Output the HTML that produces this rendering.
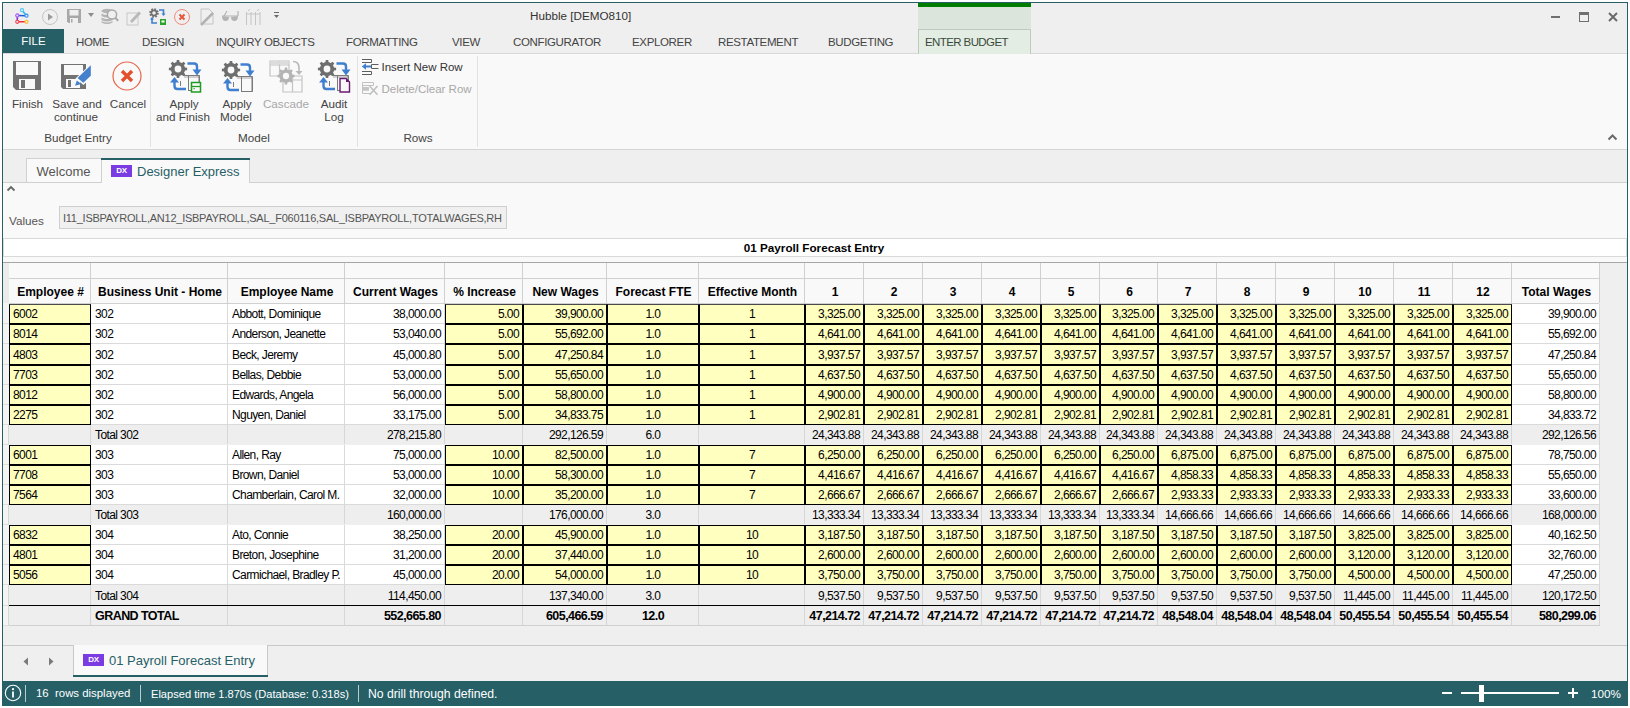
<!DOCTYPE html>
<html><head><meta charset="utf-8"><title>Hubble</title>
<style>
html,body{margin:0;padding:0;}
body{width:1630px;height:708px;position:relative;overflow:hidden;background:#fff;font-family:"Liberation Sans",sans-serif;}
body>div{position:absolute;}
.t{white-space:pre;}
</style></head><body>
<div style="left:0px;top:0px;width:1630px;height:708px;background:#ffffff;"></div>
<div style="left:2px;top:2px;width:1626px;height:704px;background:#efefef;border:1px solid #275f67;box-sizing:border-box;"></div>
<div style="left:3px;top:53px;width:1624px;height:1px;background:#d9d9d9;"></div>
<div style="left:3px;top:54px;width:1624px;height:95px;background:#f9f9f9;"></div>
<div style="left:3px;top:149px;width:1624px;height:1px;background:#d6d6d6;"></div>
<div style="left:3px;top:182px;width:1624px;height:1px;background:#d0d0d0;"></div>
<div style="left:3px;top:183px;width:1624px;height:55px;background:#f9f9f9;"></div>
<div style="left:3px;top:238px;width:1624px;height:1px;background:#d9d9d9;"></div>
<div style="left:3px;top:239px;width:1624px;height:17px;background:#ffffff;border-left:1px solid #d9d9d9;border-right:1px solid #d9d9d9;box-sizing:border-box;"></div>
<div style="left:3px;top:256px;width:1624px;height:1px;background:#d9d9d9;"></div>
<div style="left:3px;top:257px;width:1624px;height:5px;background:#f9f9f9;"></div>
<div style="left:3px;top:262px;width:1624px;height:1px;background:#a6a6a6;"></div>
<svg style="position:absolute;left:15px;top:7px" width="15" height="19" viewBox="0 0 15 19"><g stroke-width="1.6" stroke-linecap="round" fill="none"><line x1="7" y1="3.2" x2="11.5" y2="8.7" stroke="#2ab4f0"/><line x1="2.3" y1="8.5" x2="11.5" y2="8.7" stroke="#1d5ad8"/><line x1="2.3" y1="8.5" x2="2.3" y2="14.8" stroke="#8d2ad0"/><line x1="2.3" y1="14.8" x2="11.5" y2="14.8" stroke="#f2303c"/></g><g stroke-width="1.1"><circle cx="7" cy="3.2" r="1.6" fill="#d8f4ff" stroke="#52c8f8"/><circle cx="11.5" cy="8.7" r="1.6" fill="#d8ecff" stroke="#3a8ef0"/><circle cx="2.3" cy="8.5" r="1.6" fill="#ecdcff" stroke="#a35cf0"/><circle cx="2.3" cy="14.8" r="1.6" fill="#ffdde0" stroke="#f2404c"/><circle cx="11.5" cy="14.8" r="1.6" fill="#fff2cc" stroke="#f8b830"/></g></svg>
<svg style="position:absolute;left:41px;top:8px" width="18" height="18" viewBox="0 0 18 18"><circle cx="9" cy="9" r="7.5" fill="none" stroke="#c4c4c4" stroke-width="1"/><path d="M7 5.5 L12 9 L7 12.5Z" fill="#9c9c9c"/></svg>
<svg style="position:absolute;left:66px;top:8px" width="16" height="16" viewBox="0 0 16 16"><path d="M1 1H15V15H2.5L1 13.5Z" fill="#a8a8a8"/><rect x="3.5" y="2" width="9" height="5.5" fill="#efefef"/><rect x="4" y="10" width="8" height="5" fill="#efefef"/><rect x="5" y="11" width="1.5" height="3.5" fill="#a8a8a8"/></svg>
<svg style="position:absolute;left:88px;top:13px" width="7" height="5" viewBox="0 0 7 5"><path d="M0 0H6L3 4Z" fill="#8c8c8c"/></svg>
<svg style="position:absolute;left:101px;top:8px" width="18" height="17" viewBox="0 0 18 17"><g fill="#b4b4b4"><ellipse cx="6" cy="3" rx="5.5" ry="2.2"/><path d="M0.5 5.5Q6 8.5 11.5 5.5V8Q6 11 0.5 8Z"/><path d="M0.5 9.5Q6 12.5 11.5 9.5V12Q6 15 0.5 12Z"/><path d="M0.5 13Q6 16 11.5 13V14.5Q6 17.5 0.5 14.5Z"/></g><circle cx="11" cy="6.5" r="4.6" fill="#efefef" stroke="#a8a8a8" stroke-width="1.5"/><line x1="14.2" y1="9.8" x2="17.2" y2="12.8" stroke="#a8a8a8" stroke-width="2"/></svg>
<svg style="position:absolute;left:126px;top:9px" width="16" height="17" viewBox="0 0 16 17"><rect x="1" y="4" width="11" height="12" fill="none" stroke="#c8c8c8" stroke-width="1"/><path d="M4 12 L13 2.5 L15 4.5 L6 14Z" fill="#b8b8b8"/></svg>
<svg style="position:absolute;left:149px;top:8px" width="18" height="18" viewBox="0 0 18 18"><circle cx="5" cy="5" r="3.6" fill="none" stroke="#6f6f6f" stroke-width="2.4" stroke-dasharray="1.6 1.2"/><circle cx="5" cy="5" r="2.6" fill="none" stroke="#6f6f6f" stroke-width="1.6"/><path d="M10 2H14.5V6" fill="none" stroke="#3b7fd0" stroke-width="1.6"/><path d="M12.5 5.5H16.5L14.5 8Z" fill="#3b7fd0"/><path d="M8 15H3V11" fill="none" stroke="#3b7fd0" stroke-width="1.6"/><path d="M1 11.5H5L3 9Z" fill="#3b7fd0"/><rect x="11" y="11" width="6" height="6" fill="#2aa52a"/><rect x="12.5" y="12.5" width="3" height="2" fill="#fff"/></svg>
<svg style="position:absolute;left:173px;top:8px" width="18" height="18" viewBox="0 0 18 18"><circle cx="9" cy="9" r="7.5" fill="none" stroke="#f08a78" stroke-width="1"/><path d="M6.5 6.5L11.5 11.5M11.5 6.5L6.5 11.5" stroke="#e8553a" stroke-width="2"/></svg>
<svg style="position:absolute;left:199px;top:8px" width="17" height="18" viewBox="0 0 17 18"><path d="M2 1H10L14 5V16H2Z" fill="none" stroke="#c4c4c4" stroke-width="1"/><path d="M2 17 L14 5" stroke="#b2b2b2" stroke-width="2.5"/></svg>
<svg style="position:absolute;left:221px;top:10px" width="18" height="12" viewBox="0 0 18 12"><path d="M1 6 Q1 11 4.5 11 Q8 11 8 7Z M10 7 Q10 11 13.5 11 Q17 11 17 6Z" fill="#b4b4b4"/><path d="M1 6H17 M3 6L6 1 M17 6V1" stroke="#b4b4b4" stroke-width="1.2" fill="none"/></svg>
<svg style="position:absolute;left:245px;top:8px" width="18" height="18" viewBox="0 0 18 18"><path d="M1.5 4V17 M6 4V17 M10.5 4V17 M15 4V17 M1.5 6H15" stroke="#c4c4c4" stroke-width="1" fill="none"/><path d="M3 3L5 1 M12 3L14 1" stroke="#c4c4c4" stroke-width="1"/></svg>
<svg style="position:absolute;left:274px;top:12px" width="6" height="8" viewBox="0 0 6 8"><rect x="0" y="0" width="5" height="1" fill="#6a6a6a"/><path d="M0 3H5L2.5 6Z" fill="#6a6a6a"/></svg>
<div class="t" style="left:530px;top:10.10px;font-size:11.7px;line-height:11.7px;color:#333;">Hubble [DEMO810]</div>
<div style="left:1551px;top:16px;width:9px;height:2px;background:#707070;"></div>
<div style="left:1579px;top:12px;width:10px;height:10px;border:1px solid #707070;border-top-width:3px;box-sizing:border-box;"></div>
<svg style="position:absolute;left:1608px;top:12px" width="10" height="10" viewBox="0 0 10 10"><path d="M1 1L9 9M9 1L1 9" stroke="#6a6a6a" stroke-width="2"/></svg>
<div style="left:3px;top:29px;width:61px;height:24px;background:#275f67;"></div>
<div class="t" style="left:3.50px;top:35.77px;width:60px;text-align:center;font-size:11.5px;line-height:11.5px;color:#fff;">FILE</div>
<div class="t" style="left:76px;top:37.27px;font-size:11.5px;line-height:11.5px;color:#444;letter-spacing:-0.35px;">HOME</div>
<div class="t" style="left:142px;top:37.27px;font-size:11.5px;line-height:11.5px;color:#444;letter-spacing:-0.35px;">DESIGN</div>
<div class="t" style="left:216px;top:37.27px;font-size:11.5px;line-height:11.5px;color:#444;letter-spacing:-0.35px;">INQUIRY OBJECTS</div>
<div class="t" style="left:346px;top:37.27px;font-size:11.5px;line-height:11.5px;color:#444;letter-spacing:-0.35px;">FORMATTING</div>
<div class="t" style="left:452px;top:37.27px;font-size:11.5px;line-height:11.5px;color:#444;letter-spacing:-0.35px;">VIEW</div>
<div class="t" style="left:513px;top:37.27px;font-size:11.5px;line-height:11.5px;color:#444;letter-spacing:-0.35px;">CONFIGURATOR</div>
<div class="t" style="left:632px;top:37.27px;font-size:11.5px;line-height:11.5px;color:#444;letter-spacing:-0.35px;">EXPLORER</div>
<div class="t" style="left:718px;top:37.27px;font-size:11.5px;line-height:11.5px;color:#444;letter-spacing:-0.35px;">RESTATEMENT</div>
<div class="t" style="left:828px;top:37.27px;font-size:11.5px;line-height:11.5px;color:#444;letter-spacing:-0.35px;">BUDGETING</div>
<div style="left:918px;top:3px;width:113px;height:4px;background:#007d00;"></div>
<div style="left:918px;top:7px;width:113px;height:22px;background:#dce5dc;"></div>
<div style="left:918px;top:29px;width:113px;height:25px;background:#e4ede4;border:1px solid #bccbbc;border-bottom:none;box-sizing:border-box;"></div>
<div class="t" style="left:925px;top:37.27px;font-size:11.5px;line-height:11.5px;color:#3a4a3a;letter-spacing:-0.6px;">ENTER BUDGET</div>
<svg style="position:absolute;left:13px;top:61px" width="29" height="30" viewBox="0 0 29 30"><path d="M0 0H28V29H3L0 26Z" fill="#727272"/><rect x="3" y="1" width="22" height="13" fill="#f9f9f9"/><rect x="6" y="18" width="16" height="10" fill="#f9f9f9"/><rect x="8" y="19" width="4" height="8" fill="#727272"/></svg>
<div class="t" style="left:-2.50px;top:98.10px;width:60px;text-align:center;font-size:11.7px;line-height:11.7px;color:#444;">Finish</div>
<svg style="position:absolute;left:61px;top:63px" width="32" height="28" viewBox="0 0 32 28"><path d="M0 1H25V26H2L0 24Z" fill="#727272"/><rect x="3" y="2" width="19" height="10" fill="#f9f9f9"/><rect x="5" y="16" width="14" height="9" fill="#f9f9f9"/><rect x="7" y="17" width="3" height="7" fill="#727272"/><path d="M14.5 15.5 L30.8 0 L31.5 0 V13.5 L22.5 22 Z" fill="#f9f9f9"/><path d="M16.5 15 L29.8 2.25 V12.7 L22.3 19.75 Z" fill="#4480cc"/><path d="M14 22.7 L15.8 17.5 L20.5 21 Z" fill="#4480cc"/></svg>
<div class="t" style="left:37.00px;top:98.10px;width:80px;text-align:center;font-size:11.7px;line-height:11.7px;color:#444;">Save and</div>
<div class="t" style="left:36.00px;top:111.10px;width:80px;text-align:center;font-size:11.7px;line-height:11.7px;color:#444;">continue</div>
<svg style="position:absolute;left:112px;top:61px" width="30" height="30" viewBox="0 0 30 30"><circle cx="15" cy="15" r="14" fill="none" stroke="#e8664a" stroke-width="1.2"/><path d="M10 10L20 20M20 10L10 20" stroke="#e2502e" stroke-width="3.4"/></svg>
<div class="t" style="left:98.00px;top:98.10px;width:60px;text-align:center;font-size:11.7px;line-height:11.7px;color:#444;">Cancel</div>
<div class="t" style="left:28.00px;top:132.10px;width:100px;text-align:center;font-size:11.7px;line-height:11.7px;color:#444;">Budget Entry</div>
<div style="left:150px;top:56px;width:1px;height:91px;background:#e2e2e2;"></div>
<svg style="position:absolute;left:168px;top:59px" width="35" height="35" viewBox="0 0 35 35"><polygon points="8.41,3.38 8.78,0.88 11.22,0.88 11.59,3.38 13.56,4.20 15.58,2.69 17.31,4.42 15.80,6.44 16.62,8.41 19.12,8.78 19.12,11.22 16.62,11.59 15.80,13.56 17.31,15.58 15.58,17.31 13.56,15.80 11.59,16.62 11.22,19.12 8.78,19.12 8.41,16.62 6.44,15.80 4.42,17.31 2.69,15.58 4.20,13.56 3.38,11.59 0.88,11.22 0.88,8.78 3.38,8.41 4.20,6.44 2.69,4.42 4.42,2.69 6.44,4.20" fill="#6e6e6e"/><circle cx="10" cy="10" r="7.11" fill="#6e6e6e"/><circle cx="10" cy="10" r="3.40" fill="#f9f9f9"/><path d="M19.5 4.5H26Q29 4.5 29 7.5V12" fill="none" stroke="#3f7fcf" stroke-width="2.4"/><path d="M24.5 10.5H33.5L29 16.5Z" fill="#3f7fcf"/><path d="M18 30H9.5Q6.5 30 6.5 27V23" fill="none" stroke="#3f7fcf" stroke-width="2.4"/><path d="M2 23.5H11L6.5 18Z" fill="#3f7fcf"/><rect x="16" y="16.5" width="15" height="2.5" fill="#d0d0d0"/><path d="M15 16.5H31.5V31.5H20 M20.5 16.5V31.5 M31 16.5V31.5 M12.5 22V27" fill="none" stroke="#7a7a7a" stroke-width="1"/><rect x="23.5" y="23.5" width="9" height="9.5" fill="#f9f9f9" stroke="#1e9e1e" stroke-width="1.5"/><path d="M23.5 27.5H32.5" stroke="#1e9e1e" stroke-width="1.3"/><rect x="25.5" y="29" width="1.2" height="1.2" fill="#1e9e1e"/></svg>
<div class="t" style="left:144.00px;top:98.10px;width:80px;text-align:center;font-size:11.7px;line-height:11.7px;color:#444;">Apply</div>
<div class="t" style="left:143.00px;top:111.10px;width:80px;text-align:center;font-size:11.7px;line-height:11.7px;color:#444;">and Finish</div>
<svg style="position:absolute;left:221px;top:60px" width="35" height="35" viewBox="0 0 35 35"><polygon points="8.41,3.38 8.78,0.88 11.22,0.88 11.59,3.38 13.56,4.20 15.58,2.69 17.31,4.42 15.80,6.44 16.62,8.41 19.12,8.78 19.12,11.22 16.62,11.59 15.80,13.56 17.31,15.58 15.58,17.31 13.56,15.80 11.59,16.62 11.22,19.12 8.78,19.12 8.41,16.62 6.44,15.80 4.42,17.31 2.69,15.58 4.20,13.56 3.38,11.59 0.88,11.22 0.88,8.78 3.38,8.41 4.20,6.44 2.69,4.42 4.42,2.69 6.44,4.20" fill="#6e6e6e"/><circle cx="10" cy="10" r="7.11" fill="#6e6e6e"/><circle cx="10" cy="10" r="3.40" fill="#f9f9f9"/><path d="M19.5 4.5H26Q29 4.5 29 7.5V12" fill="none" stroke="#3f7fcf" stroke-width="2.4"/><path d="M24.5 10.5H33.5L29 16.5Z" fill="#3f7fcf"/><path d="M18 30H9.5Q6.5 30 6.5 27V23" fill="none" stroke="#3f7fcf" stroke-width="2.4"/><path d="M2 23.5H11L6.5 18Z" fill="#3f7fcf"/><rect x="16" y="16.5" width="15" height="2.5" fill="#d0d0d0"/><path d="M15 16.5H31.5V31.5H20 M20.5 16.5V31.5 M31 16.5V31.5 M12.5 22V27" fill="none" stroke="#7a7a7a" stroke-width="1"/></svg>
<div class="t" style="left:197.00px;top:98.10px;width:80px;text-align:center;font-size:11.7px;line-height:11.7px;color:#444;">Apply</div>
<div class="t" style="left:196.00px;top:111.10px;width:80px;text-align:center;font-size:11.7px;line-height:11.7px;color:#444;">Model</div>
<svg style="position:absolute;left:269px;top:59px" width="36" height="36" viewBox="0 0 36 36"><path d="M1 2H20V17H1Z M1 6H20 M10.5 2V17" fill="none" stroke="#c4c4c4" stroke-width="1.2"/><rect x="1.5" y="2.5" width="18" height="3" fill="#dcdcdc"/><path d="M14 17H33V33H14Z M14 21H33 M23.5 17V33" fill="none" stroke="#c4c4c4" stroke-width="1.2"/><polygon points="15.53,10.88 15.87,8.58 18.13,8.58 18.47,10.88 20.29,11.64 22.16,10.24 23.76,11.84 22.36,13.71 23.12,15.53 25.42,15.87 25.42,18.13 23.12,18.47 22.36,20.29 23.76,22.16 22.16,23.76 20.29,22.36 18.47,23.12 18.13,25.42 15.87,25.42 15.53,23.12 13.71,22.36 11.84,23.76 10.24,22.16 11.64,20.29 10.88,18.47 8.58,18.13 8.58,15.87 10.88,15.53 11.64,13.71 10.24,11.84 11.84,10.24 13.71,11.64" fill="#b4b4b4"/><circle cx="17" cy="17" r="6.59" fill="#b4b4b4"/><circle cx="17" cy="17" r="3.15" fill="#f9f9f9"/><path d="M24 2.5Q30 2.5 30 9V13" fill="none" stroke="#b8b8b8" stroke-width="1.6"/><path d="M26.5 12H33.5L30 16Z" fill="#b8b8b8"/></svg>
<div class="t" style="left:246.00px;top:98.10px;width:80px;text-align:center;font-size:11.7px;line-height:11.7px;color:#a8a8a8;">Cascade</div>
<svg style="position:absolute;left:317px;top:59px" width="35" height="35" viewBox="0 0 35 35"><polygon points="8.41,3.38 8.78,0.88 11.22,0.88 11.59,3.38 13.56,4.20 15.58,2.69 17.31,4.42 15.80,6.44 16.62,8.41 19.12,8.78 19.12,11.22 16.62,11.59 15.80,13.56 17.31,15.58 15.58,17.31 13.56,15.80 11.59,16.62 11.22,19.12 8.78,19.12 8.41,16.62 6.44,15.80 4.42,17.31 2.69,15.58 4.20,13.56 3.38,11.59 0.88,11.22 0.88,8.78 3.38,8.41 4.20,6.44 2.69,4.42 4.42,2.69 6.44,4.20" fill="#6e6e6e"/><circle cx="10" cy="10" r="7.11" fill="#6e6e6e"/><circle cx="10" cy="10" r="3.40" fill="#f9f9f9"/><path d="M19.5 4.5H26Q29 4.5 29 7.5V12" fill="none" stroke="#3f7fcf" stroke-width="2.4"/><path d="M24.5 10.5H33.5L29 16.5Z" fill="#3f7fcf"/><path d="M18 30H9.5Q6.5 30 6.5 27V23" fill="none" stroke="#3f7fcf" stroke-width="2.4"/><path d="M2 23.5H11L6.5 18Z" fill="#3f7fcf"/><rect x="16" y="16.5" width="15" height="2.5" fill="#d0d0d0"/><path d="M15 16.5H31.5V31.5H20 M20.5 16.5V31.5 M31 16.5V31.5 M12.5 22V27" fill="none" stroke="#7a7a7a" stroke-width="1"/><path d="M23 19.5H29L32.5 23V33H23Z" fill="#f9f9f9" stroke="#6a1b74" stroke-width="1.4"/><path d="M29 19.5L32.5 23H29Z" fill="#6a1b74"/></svg>
<div class="t" style="left:294.00px;top:98.10px;width:80px;text-align:center;font-size:11.7px;line-height:11.7px;color:#444;">Audit</div>
<div class="t" style="left:294.00px;top:111.10px;width:80px;text-align:center;font-size:11.7px;line-height:11.7px;color:#444;">Log</div>
<div class="t" style="left:214.00px;top:132.10px;width:80px;text-align:center;font-size:11.7px;line-height:11.7px;color:#444;">Model</div>
<div style="left:357px;top:56px;width:1px;height:91px;background:#e2e2e2;"></div>
<svg style="position:absolute;left:361px;top:58px" width="18" height="18" viewBox="0 0 18 18"><path d="M1 1.5H10.5V4.5H1 M17.5 6.5H10.5V10.5H17.5 M1 13.5H10.5V16.5H1" fill="none" stroke="#5e5e5e" stroke-width="1"/><path d="M4 8.5H10" stroke="#3f7fcf" stroke-width="2"/><path d="M0.8 8.5L5 5.3V11.7Z" fill="#3f7fcf"/></svg>
<div class="t" style="left:381.5px;top:62.27px;font-size:11.5px;line-height:11.5px;color:#333;">Insert New Row</div>
<svg style="position:absolute;left:361px;top:81px" width="18" height="16" viewBox="0 0 18 16"><path d="M1.5 1.5H12.5V4.5 M1.5 4.5H12.5 M1.5 1.5V12.5H9" fill="none" stroke="#c2c2c2" stroke-width="1"/><rect x="1" y="6" width="7" height="3.7" fill="#c4c4c4"/><path d="M8.6 5L16.5 13.8M16.5 5L8.6 13.8" stroke="#c0c0c0" stroke-width="1.6"/></svg>
<div class="t" style="left:381.5px;top:84.27px;font-size:11.5px;line-height:11.5px;color:#a8a8a8;">Delete/Clear Row</div>
<div class="t" style="left:378.00px;top:132.10px;width:80px;text-align:center;font-size:11.7px;line-height:11.7px;color:#444;">Rows</div>
<div style="left:477px;top:56px;width:1px;height:91px;background:#e2e2e2;"></div>
<svg style="position:absolute;left:1607px;top:133px" width="11" height="8" viewBox="0 0 11 8"><path d="M1.5 6.5L5.5 2.5L9.5 6.5" fill="none" stroke="#6a6a6a" stroke-width="2"/></svg>
<div style="left:26px;top:158px;width:76px;height:24px;background:#f9f9f9;border:1px solid #d0d0d0;border-bottom:none;box-sizing:border-box;"></div>
<div class="t" style="left:36.5px;top:165.00px;font-size:13px;line-height:13px;color:#555;">Welcome</div>
<div style="left:101px;top:158px;width:149px;height:25px;background:#f9f9f9;border-left:1px solid #d0d0d0;border-right:1px solid #d0d0d0;box-sizing:border-box;"></div>
<div style="left:101px;top:158px;width:149px;height:2px;background:#275f67;"></div>
<div style="left:111px;top:165px;width:21px;height:12px;background:#7b3be3;color:#fff;font:bold 8px/12px 'Liberation Sans',sans-serif;text-align:center;letter-spacing:-0.3px">DX</div>
<div class="t" style="left:137px;top:165.00px;font-size:13px;line-height:13px;color:#275f67;">Designer Express</div>
<svg style="position:absolute;left:6px;top:185px" width="10" height="8" viewBox="0 0 10 8"><path d="M1.5 5.5L5 2L8.5 5.5" fill="none" stroke="#666" stroke-width="1.8"/></svg>
<div class="t" style="left:9px;top:215.10px;font-size:11.7px;line-height:11.7px;color:#555;">Values</div>
<div style="left:59px;top:206px;width:448px;height:23px;background:#f0f0f0;border:1px solid #cfcfcf;box-sizing:border-box;"></div>
<div class="t" style="left:63px;top:212px;width:439px;height:14px;overflow:hidden;font-size:11px;letter-spacing:-0.25px;line-height:12px;color:#555;">I11_ISBPAYROLL,AN12_ISBPAYROLL,SAL_F060116,SAL_ISBPAYROLL,TOTALWAGES,RH</div>
<div class="t" style="left:664.00px;top:242.10px;width:300px;text-align:center;font-size:11.7px;line-height:11.7px;font-weight:bold;color:#000;">01 Payroll Forecast Entry</div>
<div style="left:3px;top:263px;width:6px;height:363px;background:#f4f4f4;"></div>
<div style="left:3px;top:263px;width:6px;height:40px;background:#ebebeb;"></div>
<div style="left:9px;top:263px;width:1590px;height:40px;background:#f9f9f9;"></div>
<div style="left:9px;top:278px;width:1590px;height:1px;background:#d0d0d0;"></div>
<div style="left:9px;top:303px;width:1590px;height:1px;background:#d0d0d0;"></div>
<div style="left:90px;top:263px;width:1px;height:40px;background:#d0d0d0;"></div>
<div style="left:227px;top:263px;width:1px;height:40px;background:#d0d0d0;"></div>
<div style="left:344px;top:263px;width:1px;height:40px;background:#d0d0d0;"></div>
<div style="left:444px;top:263px;width:1px;height:40px;background:#d0d0d0;"></div>
<div style="left:522px;top:263px;width:1px;height:40px;background:#d0d0d0;"></div>
<div style="left:606px;top:263px;width:1px;height:40px;background:#d0d0d0;"></div>
<div style="left:698px;top:263px;width:1px;height:40px;background:#d0d0d0;"></div>
<div style="left:804px;top:263px;width:1px;height:40px;background:#d0d0d0;"></div>
<div style="left:863px;top:263px;width:1px;height:40px;background:#d0d0d0;"></div>
<div style="left:922px;top:263px;width:1px;height:40px;background:#d0d0d0;"></div>
<div style="left:981px;top:263px;width:1px;height:40px;background:#d0d0d0;"></div>
<div style="left:1040px;top:263px;width:1px;height:40px;background:#d0d0d0;"></div>
<div style="left:1099px;top:263px;width:1px;height:40px;background:#d0d0d0;"></div>
<div style="left:1157px;top:263px;width:1px;height:40px;background:#d0d0d0;"></div>
<div style="left:1216px;top:263px;width:1px;height:40px;background:#d0d0d0;"></div>
<div style="left:1275px;top:263px;width:1px;height:40px;background:#d0d0d0;"></div>
<div style="left:1334px;top:263px;width:1px;height:40px;background:#d0d0d0;"></div>
<div style="left:1393px;top:263px;width:1px;height:40px;background:#d0d0d0;"></div>
<div style="left:1452px;top:263px;width:1px;height:40px;background:#d0d0d0;"></div>
<div style="left:1511px;top:263px;width:1px;height:40px;background:#d0d0d0;"></div>
<div style="left:1599px;top:263px;width:1px;height:40px;background:#d0d0d0;"></div>
<div class="t" style="left:-0.50px;top:285.84px;width:102px;text-align:center;font-size:12px;line-height:12px;font-weight:bold;color:#000;">Employee #</div>
<div class="t" style="left:81.50px;top:285.84px;width:157px;text-align:center;font-size:12px;line-height:12px;font-weight:bold;color:#000;">Business Unit - Home</div>
<div class="t" style="left:218.50px;top:285.84px;width:137px;text-align:center;font-size:12px;line-height:12px;font-weight:bold;color:#000;">Employee Name</div>
<div class="t" style="left:335.50px;top:285.84px;width:120px;text-align:center;font-size:12px;line-height:12px;font-weight:bold;color:#000;">Current Wages</div>
<div class="t" style="left:435.50px;top:285.84px;width:98px;text-align:center;font-size:12px;line-height:12px;font-weight:bold;color:#000;">% Increase</div>
<div class="t" style="left:513.50px;top:285.84px;width:104px;text-align:center;font-size:12px;line-height:12px;font-weight:bold;color:#000;">New Wages</div>
<div class="t" style="left:597.50px;top:285.84px;width:112px;text-align:center;font-size:12px;line-height:12px;font-weight:bold;color:#000;">Forecast FTE</div>
<div class="t" style="left:689.50px;top:285.84px;width:126px;text-align:center;font-size:12px;line-height:12px;font-weight:bold;color:#000;">Effective Month</div>
<div class="t" style="left:795.50px;top:285.84px;width:79px;text-align:center;font-size:12px;line-height:12px;font-weight:bold;color:#000;">1</div>
<div class="t" style="left:854.50px;top:285.84px;width:79px;text-align:center;font-size:12px;line-height:12px;font-weight:bold;color:#000;">2</div>
<div class="t" style="left:913.50px;top:285.84px;width:79px;text-align:center;font-size:12px;line-height:12px;font-weight:bold;color:#000;">3</div>
<div class="t" style="left:972.50px;top:285.84px;width:79px;text-align:center;font-size:12px;line-height:12px;font-weight:bold;color:#000;">4</div>
<div class="t" style="left:1031.50px;top:285.84px;width:79px;text-align:center;font-size:12px;line-height:12px;font-weight:bold;color:#000;">5</div>
<div class="t" style="left:1090.50px;top:285.84px;width:78px;text-align:center;font-size:12px;line-height:12px;font-weight:bold;color:#000;">6</div>
<div class="t" style="left:1148.50px;top:285.84px;width:79px;text-align:center;font-size:12px;line-height:12px;font-weight:bold;color:#000;">7</div>
<div class="t" style="left:1207.50px;top:285.84px;width:79px;text-align:center;font-size:12px;line-height:12px;font-weight:bold;color:#000;">8</div>
<div class="t" style="left:1266.50px;top:285.84px;width:79px;text-align:center;font-size:12px;line-height:12px;font-weight:bold;color:#000;">9</div>
<div class="t" style="left:1325.50px;top:285.84px;width:79px;text-align:center;font-size:12px;line-height:12px;font-weight:bold;color:#000;">10</div>
<div class="t" style="left:1384.50px;top:285.84px;width:79px;text-align:center;font-size:12px;line-height:12px;font-weight:bold;color:#000;">11</div>
<div class="t" style="left:1443.50px;top:285.84px;width:79px;text-align:center;font-size:12px;line-height:12px;font-weight:bold;color:#000;">12</div>
<div class="t" style="left:1502.50px;top:285.84px;width:108px;text-align:center;font-size:12px;line-height:12px;font-weight:bold;color:#000;">Total Wages</div>
<div style="left:9px;top:304px;width:1590px;height:19px;background:#ffffff;"></div>
<div style="left:9px;top:323px;width:1590px;height:1px;background:#dadada;"></div>
<div style="left:90px;top:304px;width:1px;height:19px;background:#dadada;"></div>
<div style="left:227px;top:304px;width:1px;height:19px;background:#dadada;"></div>
<div style="left:344px;top:304px;width:1px;height:19px;background:#dadada;"></div>
<div style="left:444px;top:304px;width:1px;height:19px;background:#dadada;"></div>
<div style="left:522px;top:304px;width:1px;height:19px;background:#dadada;"></div>
<div style="left:606px;top:304px;width:1px;height:19px;background:#dadada;"></div>
<div style="left:698px;top:304px;width:1px;height:19px;background:#dadada;"></div>
<div style="left:804px;top:304px;width:1px;height:19px;background:#dadada;"></div>
<div style="left:863px;top:304px;width:1px;height:19px;background:#dadada;"></div>
<div style="left:922px;top:304px;width:1px;height:19px;background:#dadada;"></div>
<div style="left:981px;top:304px;width:1px;height:19px;background:#dadada;"></div>
<div style="left:1040px;top:304px;width:1px;height:19px;background:#dadada;"></div>
<div style="left:1099px;top:304px;width:1px;height:19px;background:#dadada;"></div>
<div style="left:1157px;top:304px;width:1px;height:19px;background:#dadada;"></div>
<div style="left:1216px;top:304px;width:1px;height:19px;background:#dadada;"></div>
<div style="left:1275px;top:304px;width:1px;height:19px;background:#dadada;"></div>
<div style="left:1334px;top:304px;width:1px;height:19px;background:#dadada;"></div>
<div style="left:1393px;top:304px;width:1px;height:19px;background:#dadada;"></div>
<div style="left:1452px;top:304px;width:1px;height:19px;background:#dadada;"></div>
<div style="left:1511px;top:304px;width:1px;height:19px;background:#dadada;"></div>
<div style="left:1599px;top:304px;width:1px;height:20px;background:#dadada;"></div>
<div style="left:3px;top:323px;width:6px;height:1px;background:#dedede;"></div>
<div style="left:9px;top:304px;width:82px;height:20px;background:#ffffc0;border:1px solid #000;border-top-color:#4a4a4a;box-sizing:border-box;"></div>
<div style="left:445px;top:304px;width:78px;height:20px;background:#ffffc0;border:1px solid #000;border-top-color:#4a4a4a;box-sizing:border-box;"></div>
<div style="left:523px;top:304px;width:84px;height:20px;background:#ffffc0;border:1px solid #000;border-top-color:#4a4a4a;box-sizing:border-box;"></div>
<div style="left:607px;top:304px;width:92px;height:20px;background:#ffffc0;border:1px solid #000;border-top-color:#4a4a4a;box-sizing:border-box;"></div>
<div style="left:699px;top:304px;width:106px;height:20px;background:#ffffc0;border:1px solid #000;border-top-color:#4a4a4a;box-sizing:border-box;"></div>
<div style="left:805px;top:304px;width:59px;height:20px;background:#ffffc0;border:1px solid #000;border-top-color:#4a4a4a;box-sizing:border-box;"></div>
<div style="left:864px;top:304px;width:59px;height:20px;background:#ffffc0;border:1px solid #000;border-top-color:#4a4a4a;box-sizing:border-box;"></div>
<div style="left:923px;top:304px;width:59px;height:20px;background:#ffffc0;border:1px solid #000;border-top-color:#4a4a4a;box-sizing:border-box;"></div>
<div style="left:982px;top:304px;width:59px;height:20px;background:#ffffc0;border:1px solid #000;border-top-color:#4a4a4a;box-sizing:border-box;"></div>
<div style="left:1041px;top:304px;width:59px;height:20px;background:#ffffc0;border:1px solid #000;border-top-color:#4a4a4a;box-sizing:border-box;"></div>
<div style="left:1100px;top:304px;width:58px;height:20px;background:#ffffc0;border:1px solid #000;border-top-color:#4a4a4a;box-sizing:border-box;"></div>
<div style="left:1158px;top:304px;width:59px;height:20px;background:#ffffc0;border:1px solid #000;border-top-color:#4a4a4a;box-sizing:border-box;"></div>
<div style="left:1217px;top:304px;width:59px;height:20px;background:#ffffc0;border:1px solid #000;border-top-color:#4a4a4a;box-sizing:border-box;"></div>
<div style="left:1276px;top:304px;width:59px;height:20px;background:#ffffc0;border:1px solid #000;border-top-color:#4a4a4a;box-sizing:border-box;"></div>
<div style="left:1335px;top:304px;width:59px;height:20px;background:#ffffc0;border:1px solid #000;border-top-color:#4a4a4a;box-sizing:border-box;"></div>
<div style="left:1394px;top:304px;width:59px;height:20px;background:#ffffc0;border:1px solid #000;border-top-color:#4a4a4a;box-sizing:border-box;"></div>
<div style="left:1453px;top:304px;width:59px;height:20px;background:#ffffc0;border:1px solid #000;border-top-color:#4a4a4a;box-sizing:border-box;"></div>
<div class="t" style="left:13px;top:307.84px;font-size:12px;line-height:12px;color:#000;letter-spacing:-0.6px;">6002</div>
<div class="t" style="left:95px;top:307.84px;font-size:12px;line-height:12px;color:#000;letter-spacing:-0.6px;">302</div>
<div class="t" style="left:232px;top:307.84px;font-size:12px;line-height:12px;color:#000;letter-spacing:-0.6px;">Abbott, Dominique</div>
<div class="t" style="left:341.00px;top:307.84px;width:100px;text-align:right;font-size:12px;line-height:12px;color:#000;letter-spacing:-0.6px;">38,000.00</div>
<div class="t" style="left:441.00px;top:307.84px;width:78px;text-align:right;font-size:12px;line-height:12px;color:#000;letter-spacing:-0.6px;">5.00</div>
<div class="t" style="left:519.00px;top:307.84px;width:84px;text-align:right;font-size:12px;line-height:12px;color:#000;letter-spacing:-0.6px;">39,900.00</div>
<div class="t" style="left:607.00px;top:307.84px;width:92px;text-align:center;font-size:12px;line-height:12px;color:#000;letter-spacing:-0.6px;">1.0</div>
<div class="t" style="left:699.00px;top:307.84px;width:106px;text-align:center;font-size:12px;line-height:12px;color:#000;letter-spacing:-0.6px;">1</div>
<div class="t" style="left:801.00px;top:307.84px;width:59px;text-align:right;font-size:12px;line-height:12px;color:#000;letter-spacing:-0.6px;">3,325.00</div>
<div class="t" style="left:860.00px;top:307.84px;width:59px;text-align:right;font-size:12px;line-height:12px;color:#000;letter-spacing:-0.6px;">3,325.00</div>
<div class="t" style="left:919.00px;top:307.84px;width:59px;text-align:right;font-size:12px;line-height:12px;color:#000;letter-spacing:-0.6px;">3,325.00</div>
<div class="t" style="left:978.00px;top:307.84px;width:59px;text-align:right;font-size:12px;line-height:12px;color:#000;letter-spacing:-0.6px;">3,325.00</div>
<div class="t" style="left:1037.00px;top:307.84px;width:59px;text-align:right;font-size:12px;line-height:12px;color:#000;letter-spacing:-0.6px;">3,325.00</div>
<div class="t" style="left:1096.00px;top:307.84px;width:58px;text-align:right;font-size:12px;line-height:12px;color:#000;letter-spacing:-0.6px;">3,325.00</div>
<div class="t" style="left:1154.00px;top:307.84px;width:59px;text-align:right;font-size:12px;line-height:12px;color:#000;letter-spacing:-0.6px;">3,325.00</div>
<div class="t" style="left:1213.00px;top:307.84px;width:59px;text-align:right;font-size:12px;line-height:12px;color:#000;letter-spacing:-0.6px;">3,325.00</div>
<div class="t" style="left:1272.00px;top:307.84px;width:59px;text-align:right;font-size:12px;line-height:12px;color:#000;letter-spacing:-0.6px;">3,325.00</div>
<div class="t" style="left:1331.00px;top:307.84px;width:59px;text-align:right;font-size:12px;line-height:12px;color:#000;letter-spacing:-0.6px;">3,325.00</div>
<div class="t" style="left:1390.00px;top:307.84px;width:59px;text-align:right;font-size:12px;line-height:12px;color:#000;letter-spacing:-0.6px;">3,325.00</div>
<div class="t" style="left:1449.00px;top:307.84px;width:59px;text-align:right;font-size:12px;line-height:12px;color:#000;letter-spacing:-0.6px;">3,325.00</div>
<div class="t" style="left:1508.00px;top:307.84px;width:88px;text-align:right;font-size:12px;line-height:12px;color:#000;letter-spacing:-0.6px;">39,900.00</div>
<div style="left:9px;top:324px;width:1590px;height:19px;background:#ffffff;"></div>
<div style="left:9px;top:343px;width:1590px;height:1px;background:#dadada;"></div>
<div style="left:90px;top:324px;width:1px;height:19px;background:#dadada;"></div>
<div style="left:227px;top:324px;width:1px;height:19px;background:#dadada;"></div>
<div style="left:344px;top:324px;width:1px;height:19px;background:#dadada;"></div>
<div style="left:444px;top:324px;width:1px;height:19px;background:#dadada;"></div>
<div style="left:522px;top:324px;width:1px;height:19px;background:#dadada;"></div>
<div style="left:606px;top:324px;width:1px;height:19px;background:#dadada;"></div>
<div style="left:698px;top:324px;width:1px;height:19px;background:#dadada;"></div>
<div style="left:804px;top:324px;width:1px;height:19px;background:#dadada;"></div>
<div style="left:863px;top:324px;width:1px;height:19px;background:#dadada;"></div>
<div style="left:922px;top:324px;width:1px;height:19px;background:#dadada;"></div>
<div style="left:981px;top:324px;width:1px;height:19px;background:#dadada;"></div>
<div style="left:1040px;top:324px;width:1px;height:19px;background:#dadada;"></div>
<div style="left:1099px;top:324px;width:1px;height:19px;background:#dadada;"></div>
<div style="left:1157px;top:324px;width:1px;height:19px;background:#dadada;"></div>
<div style="left:1216px;top:324px;width:1px;height:19px;background:#dadada;"></div>
<div style="left:1275px;top:324px;width:1px;height:19px;background:#dadada;"></div>
<div style="left:1334px;top:324px;width:1px;height:19px;background:#dadada;"></div>
<div style="left:1393px;top:324px;width:1px;height:19px;background:#dadada;"></div>
<div style="left:1452px;top:324px;width:1px;height:19px;background:#dadada;"></div>
<div style="left:1511px;top:324px;width:1px;height:19px;background:#dadada;"></div>
<div style="left:1599px;top:324px;width:1px;height:20px;background:#dadada;"></div>
<div style="left:3px;top:343px;width:6px;height:1px;background:#dedede;"></div>
<div style="left:9px;top:324px;width:82px;height:20px;background:#ffffc0;border:1px solid #000;box-sizing:border-box;"></div>
<div style="left:445px;top:324px;width:78px;height:20px;background:#ffffc0;border:1px solid #000;box-sizing:border-box;"></div>
<div style="left:523px;top:324px;width:84px;height:20px;background:#ffffc0;border:1px solid #000;box-sizing:border-box;"></div>
<div style="left:607px;top:324px;width:92px;height:20px;background:#ffffc0;border:1px solid #000;box-sizing:border-box;"></div>
<div style="left:699px;top:324px;width:106px;height:20px;background:#ffffc0;border:1px solid #000;box-sizing:border-box;"></div>
<div style="left:805px;top:324px;width:59px;height:20px;background:#ffffc0;border:1px solid #000;box-sizing:border-box;"></div>
<div style="left:864px;top:324px;width:59px;height:20px;background:#ffffc0;border:1px solid #000;box-sizing:border-box;"></div>
<div style="left:923px;top:324px;width:59px;height:20px;background:#ffffc0;border:1px solid #000;box-sizing:border-box;"></div>
<div style="left:982px;top:324px;width:59px;height:20px;background:#ffffc0;border:1px solid #000;box-sizing:border-box;"></div>
<div style="left:1041px;top:324px;width:59px;height:20px;background:#ffffc0;border:1px solid #000;box-sizing:border-box;"></div>
<div style="left:1100px;top:324px;width:58px;height:20px;background:#ffffc0;border:1px solid #000;box-sizing:border-box;"></div>
<div style="left:1158px;top:324px;width:59px;height:20px;background:#ffffc0;border:1px solid #000;box-sizing:border-box;"></div>
<div style="left:1217px;top:324px;width:59px;height:20px;background:#ffffc0;border:1px solid #000;box-sizing:border-box;"></div>
<div style="left:1276px;top:324px;width:59px;height:20px;background:#ffffc0;border:1px solid #000;box-sizing:border-box;"></div>
<div style="left:1335px;top:324px;width:59px;height:20px;background:#ffffc0;border:1px solid #000;box-sizing:border-box;"></div>
<div style="left:1394px;top:324px;width:59px;height:20px;background:#ffffc0;border:1px solid #000;box-sizing:border-box;"></div>
<div style="left:1453px;top:324px;width:59px;height:20px;background:#ffffc0;border:1px solid #000;box-sizing:border-box;"></div>
<div class="t" style="left:13px;top:327.84px;font-size:12px;line-height:12px;color:#000;letter-spacing:-0.6px;">8014</div>
<div class="t" style="left:95px;top:327.84px;font-size:12px;line-height:12px;color:#000;letter-spacing:-0.6px;">302</div>
<div class="t" style="left:232px;top:327.84px;font-size:12px;line-height:12px;color:#000;letter-spacing:-0.6px;">Anderson, Jeanette</div>
<div class="t" style="left:341.00px;top:327.84px;width:100px;text-align:right;font-size:12px;line-height:12px;color:#000;letter-spacing:-0.6px;">53,040.00</div>
<div class="t" style="left:441.00px;top:327.84px;width:78px;text-align:right;font-size:12px;line-height:12px;color:#000;letter-spacing:-0.6px;">5.00</div>
<div class="t" style="left:519.00px;top:327.84px;width:84px;text-align:right;font-size:12px;line-height:12px;color:#000;letter-spacing:-0.6px;">55,692.00</div>
<div class="t" style="left:607.00px;top:327.84px;width:92px;text-align:center;font-size:12px;line-height:12px;color:#000;letter-spacing:-0.6px;">1.0</div>
<div class="t" style="left:699.00px;top:327.84px;width:106px;text-align:center;font-size:12px;line-height:12px;color:#000;letter-spacing:-0.6px;">1</div>
<div class="t" style="left:801.00px;top:327.84px;width:59px;text-align:right;font-size:12px;line-height:12px;color:#000;letter-spacing:-0.6px;">4,641.00</div>
<div class="t" style="left:860.00px;top:327.84px;width:59px;text-align:right;font-size:12px;line-height:12px;color:#000;letter-spacing:-0.6px;">4,641.00</div>
<div class="t" style="left:919.00px;top:327.84px;width:59px;text-align:right;font-size:12px;line-height:12px;color:#000;letter-spacing:-0.6px;">4,641.00</div>
<div class="t" style="left:978.00px;top:327.84px;width:59px;text-align:right;font-size:12px;line-height:12px;color:#000;letter-spacing:-0.6px;">4,641.00</div>
<div class="t" style="left:1037.00px;top:327.84px;width:59px;text-align:right;font-size:12px;line-height:12px;color:#000;letter-spacing:-0.6px;">4,641.00</div>
<div class="t" style="left:1096.00px;top:327.84px;width:58px;text-align:right;font-size:12px;line-height:12px;color:#000;letter-spacing:-0.6px;">4,641.00</div>
<div class="t" style="left:1154.00px;top:327.84px;width:59px;text-align:right;font-size:12px;line-height:12px;color:#000;letter-spacing:-0.6px;">4,641.00</div>
<div class="t" style="left:1213.00px;top:327.84px;width:59px;text-align:right;font-size:12px;line-height:12px;color:#000;letter-spacing:-0.6px;">4,641.00</div>
<div class="t" style="left:1272.00px;top:327.84px;width:59px;text-align:right;font-size:12px;line-height:12px;color:#000;letter-spacing:-0.6px;">4,641.00</div>
<div class="t" style="left:1331.00px;top:327.84px;width:59px;text-align:right;font-size:12px;line-height:12px;color:#000;letter-spacing:-0.6px;">4,641.00</div>
<div class="t" style="left:1390.00px;top:327.84px;width:59px;text-align:right;font-size:12px;line-height:12px;color:#000;letter-spacing:-0.6px;">4,641.00</div>
<div class="t" style="left:1449.00px;top:327.84px;width:59px;text-align:right;font-size:12px;line-height:12px;color:#000;letter-spacing:-0.6px;">4,641.00</div>
<div class="t" style="left:1508.00px;top:327.84px;width:88px;text-align:right;font-size:12px;line-height:12px;color:#000;letter-spacing:-0.6px;">55,692.00</div>
<div style="left:9px;top:344px;width:1590px;height:20px;background:#ffffff;"></div>
<div style="left:9px;top:364px;width:1590px;height:1px;background:#dadada;"></div>
<div style="left:90px;top:344px;width:1px;height:20px;background:#dadada;"></div>
<div style="left:227px;top:344px;width:1px;height:20px;background:#dadada;"></div>
<div style="left:344px;top:344px;width:1px;height:20px;background:#dadada;"></div>
<div style="left:444px;top:344px;width:1px;height:20px;background:#dadada;"></div>
<div style="left:522px;top:344px;width:1px;height:20px;background:#dadada;"></div>
<div style="left:606px;top:344px;width:1px;height:20px;background:#dadada;"></div>
<div style="left:698px;top:344px;width:1px;height:20px;background:#dadada;"></div>
<div style="left:804px;top:344px;width:1px;height:20px;background:#dadada;"></div>
<div style="left:863px;top:344px;width:1px;height:20px;background:#dadada;"></div>
<div style="left:922px;top:344px;width:1px;height:20px;background:#dadada;"></div>
<div style="left:981px;top:344px;width:1px;height:20px;background:#dadada;"></div>
<div style="left:1040px;top:344px;width:1px;height:20px;background:#dadada;"></div>
<div style="left:1099px;top:344px;width:1px;height:20px;background:#dadada;"></div>
<div style="left:1157px;top:344px;width:1px;height:20px;background:#dadada;"></div>
<div style="left:1216px;top:344px;width:1px;height:20px;background:#dadada;"></div>
<div style="left:1275px;top:344px;width:1px;height:20px;background:#dadada;"></div>
<div style="left:1334px;top:344px;width:1px;height:20px;background:#dadada;"></div>
<div style="left:1393px;top:344px;width:1px;height:20px;background:#dadada;"></div>
<div style="left:1452px;top:344px;width:1px;height:20px;background:#dadada;"></div>
<div style="left:1511px;top:344px;width:1px;height:20px;background:#dadada;"></div>
<div style="left:1599px;top:344px;width:1px;height:21px;background:#dadada;"></div>
<div style="left:3px;top:364px;width:6px;height:1px;background:#dedede;"></div>
<div style="left:9px;top:344px;width:82px;height:21px;background:#ffffc0;border:1px solid #000;box-sizing:border-box;"></div>
<div style="left:445px;top:344px;width:78px;height:21px;background:#ffffc0;border:1px solid #000;box-sizing:border-box;"></div>
<div style="left:523px;top:344px;width:84px;height:21px;background:#ffffc0;border:1px solid #000;box-sizing:border-box;"></div>
<div style="left:607px;top:344px;width:92px;height:21px;background:#ffffc0;border:1px solid #000;box-sizing:border-box;"></div>
<div style="left:699px;top:344px;width:106px;height:21px;background:#ffffc0;border:1px solid #000;box-sizing:border-box;"></div>
<div style="left:805px;top:344px;width:59px;height:21px;background:#ffffc0;border:1px solid #000;box-sizing:border-box;"></div>
<div style="left:864px;top:344px;width:59px;height:21px;background:#ffffc0;border:1px solid #000;box-sizing:border-box;"></div>
<div style="left:923px;top:344px;width:59px;height:21px;background:#ffffc0;border:1px solid #000;box-sizing:border-box;"></div>
<div style="left:982px;top:344px;width:59px;height:21px;background:#ffffc0;border:1px solid #000;box-sizing:border-box;"></div>
<div style="left:1041px;top:344px;width:59px;height:21px;background:#ffffc0;border:1px solid #000;box-sizing:border-box;"></div>
<div style="left:1100px;top:344px;width:58px;height:21px;background:#ffffc0;border:1px solid #000;box-sizing:border-box;"></div>
<div style="left:1158px;top:344px;width:59px;height:21px;background:#ffffc0;border:1px solid #000;box-sizing:border-box;"></div>
<div style="left:1217px;top:344px;width:59px;height:21px;background:#ffffc0;border:1px solid #000;box-sizing:border-box;"></div>
<div style="left:1276px;top:344px;width:59px;height:21px;background:#ffffc0;border:1px solid #000;box-sizing:border-box;"></div>
<div style="left:1335px;top:344px;width:59px;height:21px;background:#ffffc0;border:1px solid #000;box-sizing:border-box;"></div>
<div style="left:1394px;top:344px;width:59px;height:21px;background:#ffffc0;border:1px solid #000;box-sizing:border-box;"></div>
<div style="left:1453px;top:344px;width:59px;height:21px;background:#ffffc0;border:1px solid #000;box-sizing:border-box;"></div>
<div class="t" style="left:13px;top:348.84px;font-size:12px;line-height:12px;color:#000;letter-spacing:-0.6px;">4803</div>
<div class="t" style="left:95px;top:348.84px;font-size:12px;line-height:12px;color:#000;letter-spacing:-0.6px;">302</div>
<div class="t" style="left:232px;top:348.84px;font-size:12px;line-height:12px;color:#000;letter-spacing:-0.6px;">Beck, Jeremy</div>
<div class="t" style="left:341.00px;top:348.84px;width:100px;text-align:right;font-size:12px;line-height:12px;color:#000;letter-spacing:-0.6px;">45,000.80</div>
<div class="t" style="left:441.00px;top:348.84px;width:78px;text-align:right;font-size:12px;line-height:12px;color:#000;letter-spacing:-0.6px;">5.00</div>
<div class="t" style="left:519.00px;top:348.84px;width:84px;text-align:right;font-size:12px;line-height:12px;color:#000;letter-spacing:-0.6px;">47,250.84</div>
<div class="t" style="left:607.00px;top:348.84px;width:92px;text-align:center;font-size:12px;line-height:12px;color:#000;letter-spacing:-0.6px;">1.0</div>
<div class="t" style="left:699.00px;top:348.84px;width:106px;text-align:center;font-size:12px;line-height:12px;color:#000;letter-spacing:-0.6px;">1</div>
<div class="t" style="left:801.00px;top:348.84px;width:59px;text-align:right;font-size:12px;line-height:12px;color:#000;letter-spacing:-0.6px;">3,937.57</div>
<div class="t" style="left:860.00px;top:348.84px;width:59px;text-align:right;font-size:12px;line-height:12px;color:#000;letter-spacing:-0.6px;">3,937.57</div>
<div class="t" style="left:919.00px;top:348.84px;width:59px;text-align:right;font-size:12px;line-height:12px;color:#000;letter-spacing:-0.6px;">3,937.57</div>
<div class="t" style="left:978.00px;top:348.84px;width:59px;text-align:right;font-size:12px;line-height:12px;color:#000;letter-spacing:-0.6px;">3,937.57</div>
<div class="t" style="left:1037.00px;top:348.84px;width:59px;text-align:right;font-size:12px;line-height:12px;color:#000;letter-spacing:-0.6px;">3,937.57</div>
<div class="t" style="left:1096.00px;top:348.84px;width:58px;text-align:right;font-size:12px;line-height:12px;color:#000;letter-spacing:-0.6px;">3,937.57</div>
<div class="t" style="left:1154.00px;top:348.84px;width:59px;text-align:right;font-size:12px;line-height:12px;color:#000;letter-spacing:-0.6px;">3,937.57</div>
<div class="t" style="left:1213.00px;top:348.84px;width:59px;text-align:right;font-size:12px;line-height:12px;color:#000;letter-spacing:-0.6px;">3,937.57</div>
<div class="t" style="left:1272.00px;top:348.84px;width:59px;text-align:right;font-size:12px;line-height:12px;color:#000;letter-spacing:-0.6px;">3,937.57</div>
<div class="t" style="left:1331.00px;top:348.84px;width:59px;text-align:right;font-size:12px;line-height:12px;color:#000;letter-spacing:-0.6px;">3,937.57</div>
<div class="t" style="left:1390.00px;top:348.84px;width:59px;text-align:right;font-size:12px;line-height:12px;color:#000;letter-spacing:-0.6px;">3,937.57</div>
<div class="t" style="left:1449.00px;top:348.84px;width:59px;text-align:right;font-size:12px;line-height:12px;color:#000;letter-spacing:-0.6px;">3,937.57</div>
<div class="t" style="left:1508.00px;top:348.84px;width:88px;text-align:right;font-size:12px;line-height:12px;color:#000;letter-spacing:-0.6px;">47,250.84</div>
<div style="left:9px;top:365px;width:1590px;height:19px;background:#ffffff;"></div>
<div style="left:9px;top:384px;width:1590px;height:1px;background:#dadada;"></div>
<div style="left:90px;top:365px;width:1px;height:19px;background:#dadada;"></div>
<div style="left:227px;top:365px;width:1px;height:19px;background:#dadada;"></div>
<div style="left:344px;top:365px;width:1px;height:19px;background:#dadada;"></div>
<div style="left:444px;top:365px;width:1px;height:19px;background:#dadada;"></div>
<div style="left:522px;top:365px;width:1px;height:19px;background:#dadada;"></div>
<div style="left:606px;top:365px;width:1px;height:19px;background:#dadada;"></div>
<div style="left:698px;top:365px;width:1px;height:19px;background:#dadada;"></div>
<div style="left:804px;top:365px;width:1px;height:19px;background:#dadada;"></div>
<div style="left:863px;top:365px;width:1px;height:19px;background:#dadada;"></div>
<div style="left:922px;top:365px;width:1px;height:19px;background:#dadada;"></div>
<div style="left:981px;top:365px;width:1px;height:19px;background:#dadada;"></div>
<div style="left:1040px;top:365px;width:1px;height:19px;background:#dadada;"></div>
<div style="left:1099px;top:365px;width:1px;height:19px;background:#dadada;"></div>
<div style="left:1157px;top:365px;width:1px;height:19px;background:#dadada;"></div>
<div style="left:1216px;top:365px;width:1px;height:19px;background:#dadada;"></div>
<div style="left:1275px;top:365px;width:1px;height:19px;background:#dadada;"></div>
<div style="left:1334px;top:365px;width:1px;height:19px;background:#dadada;"></div>
<div style="left:1393px;top:365px;width:1px;height:19px;background:#dadada;"></div>
<div style="left:1452px;top:365px;width:1px;height:19px;background:#dadada;"></div>
<div style="left:1511px;top:365px;width:1px;height:19px;background:#dadada;"></div>
<div style="left:1599px;top:365px;width:1px;height:20px;background:#dadada;"></div>
<div style="left:3px;top:384px;width:6px;height:1px;background:#dedede;"></div>
<div style="left:9px;top:365px;width:82px;height:20px;background:#ffffc0;border:1px solid #000;box-sizing:border-box;"></div>
<div style="left:445px;top:365px;width:78px;height:20px;background:#ffffc0;border:1px solid #000;box-sizing:border-box;"></div>
<div style="left:523px;top:365px;width:84px;height:20px;background:#ffffc0;border:1px solid #000;box-sizing:border-box;"></div>
<div style="left:607px;top:365px;width:92px;height:20px;background:#ffffc0;border:1px solid #000;box-sizing:border-box;"></div>
<div style="left:699px;top:365px;width:106px;height:20px;background:#ffffc0;border:1px solid #000;box-sizing:border-box;"></div>
<div style="left:805px;top:365px;width:59px;height:20px;background:#ffffc0;border:1px solid #000;box-sizing:border-box;"></div>
<div style="left:864px;top:365px;width:59px;height:20px;background:#ffffc0;border:1px solid #000;box-sizing:border-box;"></div>
<div style="left:923px;top:365px;width:59px;height:20px;background:#ffffc0;border:1px solid #000;box-sizing:border-box;"></div>
<div style="left:982px;top:365px;width:59px;height:20px;background:#ffffc0;border:1px solid #000;box-sizing:border-box;"></div>
<div style="left:1041px;top:365px;width:59px;height:20px;background:#ffffc0;border:1px solid #000;box-sizing:border-box;"></div>
<div style="left:1100px;top:365px;width:58px;height:20px;background:#ffffc0;border:1px solid #000;box-sizing:border-box;"></div>
<div style="left:1158px;top:365px;width:59px;height:20px;background:#ffffc0;border:1px solid #000;box-sizing:border-box;"></div>
<div style="left:1217px;top:365px;width:59px;height:20px;background:#ffffc0;border:1px solid #000;box-sizing:border-box;"></div>
<div style="left:1276px;top:365px;width:59px;height:20px;background:#ffffc0;border:1px solid #000;box-sizing:border-box;"></div>
<div style="left:1335px;top:365px;width:59px;height:20px;background:#ffffc0;border:1px solid #000;box-sizing:border-box;"></div>
<div style="left:1394px;top:365px;width:59px;height:20px;background:#ffffc0;border:1px solid #000;box-sizing:border-box;"></div>
<div style="left:1453px;top:365px;width:59px;height:20px;background:#ffffc0;border:1px solid #000;box-sizing:border-box;"></div>
<div class="t" style="left:13px;top:368.84px;font-size:12px;line-height:12px;color:#000;letter-spacing:-0.6px;">7703</div>
<div class="t" style="left:95px;top:368.84px;font-size:12px;line-height:12px;color:#000;letter-spacing:-0.6px;">302</div>
<div class="t" style="left:232px;top:368.84px;font-size:12px;line-height:12px;color:#000;letter-spacing:-0.6px;">Bellas, Debbie</div>
<div class="t" style="left:341.00px;top:368.84px;width:100px;text-align:right;font-size:12px;line-height:12px;color:#000;letter-spacing:-0.6px;">53,000.00</div>
<div class="t" style="left:441.00px;top:368.84px;width:78px;text-align:right;font-size:12px;line-height:12px;color:#000;letter-spacing:-0.6px;">5.00</div>
<div class="t" style="left:519.00px;top:368.84px;width:84px;text-align:right;font-size:12px;line-height:12px;color:#000;letter-spacing:-0.6px;">55,650.00</div>
<div class="t" style="left:607.00px;top:368.84px;width:92px;text-align:center;font-size:12px;line-height:12px;color:#000;letter-spacing:-0.6px;">1.0</div>
<div class="t" style="left:699.00px;top:368.84px;width:106px;text-align:center;font-size:12px;line-height:12px;color:#000;letter-spacing:-0.6px;">1</div>
<div class="t" style="left:801.00px;top:368.84px;width:59px;text-align:right;font-size:12px;line-height:12px;color:#000;letter-spacing:-0.6px;">4,637.50</div>
<div class="t" style="left:860.00px;top:368.84px;width:59px;text-align:right;font-size:12px;line-height:12px;color:#000;letter-spacing:-0.6px;">4,637.50</div>
<div class="t" style="left:919.00px;top:368.84px;width:59px;text-align:right;font-size:12px;line-height:12px;color:#000;letter-spacing:-0.6px;">4,637.50</div>
<div class="t" style="left:978.00px;top:368.84px;width:59px;text-align:right;font-size:12px;line-height:12px;color:#000;letter-spacing:-0.6px;">4,637.50</div>
<div class="t" style="left:1037.00px;top:368.84px;width:59px;text-align:right;font-size:12px;line-height:12px;color:#000;letter-spacing:-0.6px;">4,637.50</div>
<div class="t" style="left:1096.00px;top:368.84px;width:58px;text-align:right;font-size:12px;line-height:12px;color:#000;letter-spacing:-0.6px;">4,637.50</div>
<div class="t" style="left:1154.00px;top:368.84px;width:59px;text-align:right;font-size:12px;line-height:12px;color:#000;letter-spacing:-0.6px;">4,637.50</div>
<div class="t" style="left:1213.00px;top:368.84px;width:59px;text-align:right;font-size:12px;line-height:12px;color:#000;letter-spacing:-0.6px;">4,637.50</div>
<div class="t" style="left:1272.00px;top:368.84px;width:59px;text-align:right;font-size:12px;line-height:12px;color:#000;letter-spacing:-0.6px;">4,637.50</div>
<div class="t" style="left:1331.00px;top:368.84px;width:59px;text-align:right;font-size:12px;line-height:12px;color:#000;letter-spacing:-0.6px;">4,637.50</div>
<div class="t" style="left:1390.00px;top:368.84px;width:59px;text-align:right;font-size:12px;line-height:12px;color:#000;letter-spacing:-0.6px;">4,637.50</div>
<div class="t" style="left:1449.00px;top:368.84px;width:59px;text-align:right;font-size:12px;line-height:12px;color:#000;letter-spacing:-0.6px;">4,637.50</div>
<div class="t" style="left:1508.00px;top:368.84px;width:88px;text-align:right;font-size:12px;line-height:12px;color:#000;letter-spacing:-0.6px;">55,650.00</div>
<div style="left:9px;top:385px;width:1590px;height:19px;background:#ffffff;"></div>
<div style="left:9px;top:404px;width:1590px;height:1px;background:#dadada;"></div>
<div style="left:90px;top:385px;width:1px;height:19px;background:#dadada;"></div>
<div style="left:227px;top:385px;width:1px;height:19px;background:#dadada;"></div>
<div style="left:344px;top:385px;width:1px;height:19px;background:#dadada;"></div>
<div style="left:444px;top:385px;width:1px;height:19px;background:#dadada;"></div>
<div style="left:522px;top:385px;width:1px;height:19px;background:#dadada;"></div>
<div style="left:606px;top:385px;width:1px;height:19px;background:#dadada;"></div>
<div style="left:698px;top:385px;width:1px;height:19px;background:#dadada;"></div>
<div style="left:804px;top:385px;width:1px;height:19px;background:#dadada;"></div>
<div style="left:863px;top:385px;width:1px;height:19px;background:#dadada;"></div>
<div style="left:922px;top:385px;width:1px;height:19px;background:#dadada;"></div>
<div style="left:981px;top:385px;width:1px;height:19px;background:#dadada;"></div>
<div style="left:1040px;top:385px;width:1px;height:19px;background:#dadada;"></div>
<div style="left:1099px;top:385px;width:1px;height:19px;background:#dadada;"></div>
<div style="left:1157px;top:385px;width:1px;height:19px;background:#dadada;"></div>
<div style="left:1216px;top:385px;width:1px;height:19px;background:#dadada;"></div>
<div style="left:1275px;top:385px;width:1px;height:19px;background:#dadada;"></div>
<div style="left:1334px;top:385px;width:1px;height:19px;background:#dadada;"></div>
<div style="left:1393px;top:385px;width:1px;height:19px;background:#dadada;"></div>
<div style="left:1452px;top:385px;width:1px;height:19px;background:#dadada;"></div>
<div style="left:1511px;top:385px;width:1px;height:19px;background:#dadada;"></div>
<div style="left:1599px;top:385px;width:1px;height:20px;background:#dadada;"></div>
<div style="left:3px;top:404px;width:6px;height:1px;background:#dedede;"></div>
<div style="left:9px;top:385px;width:82px;height:20px;background:#ffffc0;border:1px solid #000;box-sizing:border-box;"></div>
<div style="left:445px;top:385px;width:78px;height:20px;background:#ffffc0;border:1px solid #000;box-sizing:border-box;"></div>
<div style="left:523px;top:385px;width:84px;height:20px;background:#ffffc0;border:1px solid #000;box-sizing:border-box;"></div>
<div style="left:607px;top:385px;width:92px;height:20px;background:#ffffc0;border:1px solid #000;box-sizing:border-box;"></div>
<div style="left:699px;top:385px;width:106px;height:20px;background:#ffffc0;border:1px solid #000;box-sizing:border-box;"></div>
<div style="left:805px;top:385px;width:59px;height:20px;background:#ffffc0;border:1px solid #000;box-sizing:border-box;"></div>
<div style="left:864px;top:385px;width:59px;height:20px;background:#ffffc0;border:1px solid #000;box-sizing:border-box;"></div>
<div style="left:923px;top:385px;width:59px;height:20px;background:#ffffc0;border:1px solid #000;box-sizing:border-box;"></div>
<div style="left:982px;top:385px;width:59px;height:20px;background:#ffffc0;border:1px solid #000;box-sizing:border-box;"></div>
<div style="left:1041px;top:385px;width:59px;height:20px;background:#ffffc0;border:1px solid #000;box-sizing:border-box;"></div>
<div style="left:1100px;top:385px;width:58px;height:20px;background:#ffffc0;border:1px solid #000;box-sizing:border-box;"></div>
<div style="left:1158px;top:385px;width:59px;height:20px;background:#ffffc0;border:1px solid #000;box-sizing:border-box;"></div>
<div style="left:1217px;top:385px;width:59px;height:20px;background:#ffffc0;border:1px solid #000;box-sizing:border-box;"></div>
<div style="left:1276px;top:385px;width:59px;height:20px;background:#ffffc0;border:1px solid #000;box-sizing:border-box;"></div>
<div style="left:1335px;top:385px;width:59px;height:20px;background:#ffffc0;border:1px solid #000;box-sizing:border-box;"></div>
<div style="left:1394px;top:385px;width:59px;height:20px;background:#ffffc0;border:1px solid #000;box-sizing:border-box;"></div>
<div style="left:1453px;top:385px;width:59px;height:20px;background:#ffffc0;border:1px solid #000;box-sizing:border-box;"></div>
<div class="t" style="left:13px;top:388.84px;font-size:12px;line-height:12px;color:#000;letter-spacing:-0.6px;">8012</div>
<div class="t" style="left:95px;top:388.84px;font-size:12px;line-height:12px;color:#000;letter-spacing:-0.6px;">302</div>
<div class="t" style="left:232px;top:388.84px;font-size:12px;line-height:12px;color:#000;letter-spacing:-0.6px;">Edwards, Angela</div>
<div class="t" style="left:341.00px;top:388.84px;width:100px;text-align:right;font-size:12px;line-height:12px;color:#000;letter-spacing:-0.6px;">56,000.00</div>
<div class="t" style="left:441.00px;top:388.84px;width:78px;text-align:right;font-size:12px;line-height:12px;color:#000;letter-spacing:-0.6px;">5.00</div>
<div class="t" style="left:519.00px;top:388.84px;width:84px;text-align:right;font-size:12px;line-height:12px;color:#000;letter-spacing:-0.6px;">58,800.00</div>
<div class="t" style="left:607.00px;top:388.84px;width:92px;text-align:center;font-size:12px;line-height:12px;color:#000;letter-spacing:-0.6px;">1.0</div>
<div class="t" style="left:699.00px;top:388.84px;width:106px;text-align:center;font-size:12px;line-height:12px;color:#000;letter-spacing:-0.6px;">1</div>
<div class="t" style="left:801.00px;top:388.84px;width:59px;text-align:right;font-size:12px;line-height:12px;color:#000;letter-spacing:-0.6px;">4,900.00</div>
<div class="t" style="left:860.00px;top:388.84px;width:59px;text-align:right;font-size:12px;line-height:12px;color:#000;letter-spacing:-0.6px;">4,900.00</div>
<div class="t" style="left:919.00px;top:388.84px;width:59px;text-align:right;font-size:12px;line-height:12px;color:#000;letter-spacing:-0.6px;">4,900.00</div>
<div class="t" style="left:978.00px;top:388.84px;width:59px;text-align:right;font-size:12px;line-height:12px;color:#000;letter-spacing:-0.6px;">4,900.00</div>
<div class="t" style="left:1037.00px;top:388.84px;width:59px;text-align:right;font-size:12px;line-height:12px;color:#000;letter-spacing:-0.6px;">4,900.00</div>
<div class="t" style="left:1096.00px;top:388.84px;width:58px;text-align:right;font-size:12px;line-height:12px;color:#000;letter-spacing:-0.6px;">4,900.00</div>
<div class="t" style="left:1154.00px;top:388.84px;width:59px;text-align:right;font-size:12px;line-height:12px;color:#000;letter-spacing:-0.6px;">4,900.00</div>
<div class="t" style="left:1213.00px;top:388.84px;width:59px;text-align:right;font-size:12px;line-height:12px;color:#000;letter-spacing:-0.6px;">4,900.00</div>
<div class="t" style="left:1272.00px;top:388.84px;width:59px;text-align:right;font-size:12px;line-height:12px;color:#000;letter-spacing:-0.6px;">4,900.00</div>
<div class="t" style="left:1331.00px;top:388.84px;width:59px;text-align:right;font-size:12px;line-height:12px;color:#000;letter-spacing:-0.6px;">4,900.00</div>
<div class="t" style="left:1390.00px;top:388.84px;width:59px;text-align:right;font-size:12px;line-height:12px;color:#000;letter-spacing:-0.6px;">4,900.00</div>
<div class="t" style="left:1449.00px;top:388.84px;width:59px;text-align:right;font-size:12px;line-height:12px;color:#000;letter-spacing:-0.6px;">4,900.00</div>
<div class="t" style="left:1508.00px;top:388.84px;width:88px;text-align:right;font-size:12px;line-height:12px;color:#000;letter-spacing:-0.6px;">58,800.00</div>
<div style="left:9px;top:405px;width:1590px;height:19px;background:#ffffff;"></div>
<div style="left:9px;top:424px;width:1590px;height:1px;background:#dadada;"></div>
<div style="left:90px;top:405px;width:1px;height:19px;background:#dadada;"></div>
<div style="left:227px;top:405px;width:1px;height:19px;background:#dadada;"></div>
<div style="left:344px;top:405px;width:1px;height:19px;background:#dadada;"></div>
<div style="left:444px;top:405px;width:1px;height:19px;background:#dadada;"></div>
<div style="left:522px;top:405px;width:1px;height:19px;background:#dadada;"></div>
<div style="left:606px;top:405px;width:1px;height:19px;background:#dadada;"></div>
<div style="left:698px;top:405px;width:1px;height:19px;background:#dadada;"></div>
<div style="left:804px;top:405px;width:1px;height:19px;background:#dadada;"></div>
<div style="left:863px;top:405px;width:1px;height:19px;background:#dadada;"></div>
<div style="left:922px;top:405px;width:1px;height:19px;background:#dadada;"></div>
<div style="left:981px;top:405px;width:1px;height:19px;background:#dadada;"></div>
<div style="left:1040px;top:405px;width:1px;height:19px;background:#dadada;"></div>
<div style="left:1099px;top:405px;width:1px;height:19px;background:#dadada;"></div>
<div style="left:1157px;top:405px;width:1px;height:19px;background:#dadada;"></div>
<div style="left:1216px;top:405px;width:1px;height:19px;background:#dadada;"></div>
<div style="left:1275px;top:405px;width:1px;height:19px;background:#dadada;"></div>
<div style="left:1334px;top:405px;width:1px;height:19px;background:#dadada;"></div>
<div style="left:1393px;top:405px;width:1px;height:19px;background:#dadada;"></div>
<div style="left:1452px;top:405px;width:1px;height:19px;background:#dadada;"></div>
<div style="left:1511px;top:405px;width:1px;height:19px;background:#dadada;"></div>
<div style="left:1599px;top:405px;width:1px;height:20px;background:#dadada;"></div>
<div style="left:3px;top:424px;width:6px;height:1px;background:#dedede;"></div>
<div style="left:9px;top:405px;width:82px;height:20px;background:#ffffc0;border:1px solid #000;box-sizing:border-box;"></div>
<div style="left:445px;top:405px;width:78px;height:20px;background:#ffffc0;border:1px solid #000;box-sizing:border-box;"></div>
<div style="left:523px;top:405px;width:84px;height:20px;background:#ffffc0;border:1px solid #000;box-sizing:border-box;"></div>
<div style="left:607px;top:405px;width:92px;height:20px;background:#ffffc0;border:1px solid #000;box-sizing:border-box;"></div>
<div style="left:699px;top:405px;width:106px;height:20px;background:#ffffc0;border:1px solid #000;box-sizing:border-box;"></div>
<div style="left:805px;top:405px;width:59px;height:20px;background:#ffffc0;border:1px solid #000;box-sizing:border-box;"></div>
<div style="left:864px;top:405px;width:59px;height:20px;background:#ffffc0;border:1px solid #000;box-sizing:border-box;"></div>
<div style="left:923px;top:405px;width:59px;height:20px;background:#ffffc0;border:1px solid #000;box-sizing:border-box;"></div>
<div style="left:982px;top:405px;width:59px;height:20px;background:#ffffc0;border:1px solid #000;box-sizing:border-box;"></div>
<div style="left:1041px;top:405px;width:59px;height:20px;background:#ffffc0;border:1px solid #000;box-sizing:border-box;"></div>
<div style="left:1100px;top:405px;width:58px;height:20px;background:#ffffc0;border:1px solid #000;box-sizing:border-box;"></div>
<div style="left:1158px;top:405px;width:59px;height:20px;background:#ffffc0;border:1px solid #000;box-sizing:border-box;"></div>
<div style="left:1217px;top:405px;width:59px;height:20px;background:#ffffc0;border:1px solid #000;box-sizing:border-box;"></div>
<div style="left:1276px;top:405px;width:59px;height:20px;background:#ffffc0;border:1px solid #000;box-sizing:border-box;"></div>
<div style="left:1335px;top:405px;width:59px;height:20px;background:#ffffc0;border:1px solid #000;box-sizing:border-box;"></div>
<div style="left:1394px;top:405px;width:59px;height:20px;background:#ffffc0;border:1px solid #000;box-sizing:border-box;"></div>
<div style="left:1453px;top:405px;width:59px;height:20px;background:#ffffc0;border:1px solid #000;box-sizing:border-box;"></div>
<div class="t" style="left:13px;top:408.84px;font-size:12px;line-height:12px;color:#000;letter-spacing:-0.6px;">2275</div>
<div class="t" style="left:95px;top:408.84px;font-size:12px;line-height:12px;color:#000;letter-spacing:-0.6px;">302</div>
<div class="t" style="left:232px;top:408.84px;font-size:12px;line-height:12px;color:#000;letter-spacing:-0.6px;">Nguyen, Daniel</div>
<div class="t" style="left:341.00px;top:408.84px;width:100px;text-align:right;font-size:12px;line-height:12px;color:#000;letter-spacing:-0.6px;">33,175.00</div>
<div class="t" style="left:441.00px;top:408.84px;width:78px;text-align:right;font-size:12px;line-height:12px;color:#000;letter-spacing:-0.6px;">5.00</div>
<div class="t" style="left:519.00px;top:408.84px;width:84px;text-align:right;font-size:12px;line-height:12px;color:#000;letter-spacing:-0.6px;">34,833.75</div>
<div class="t" style="left:607.00px;top:408.84px;width:92px;text-align:center;font-size:12px;line-height:12px;color:#000;letter-spacing:-0.6px;">1.0</div>
<div class="t" style="left:699.00px;top:408.84px;width:106px;text-align:center;font-size:12px;line-height:12px;color:#000;letter-spacing:-0.6px;">1</div>
<div class="t" style="left:801.00px;top:408.84px;width:59px;text-align:right;font-size:12px;line-height:12px;color:#000;letter-spacing:-0.6px;">2,902.81</div>
<div class="t" style="left:860.00px;top:408.84px;width:59px;text-align:right;font-size:12px;line-height:12px;color:#000;letter-spacing:-0.6px;">2,902.81</div>
<div class="t" style="left:919.00px;top:408.84px;width:59px;text-align:right;font-size:12px;line-height:12px;color:#000;letter-spacing:-0.6px;">2,902.81</div>
<div class="t" style="left:978.00px;top:408.84px;width:59px;text-align:right;font-size:12px;line-height:12px;color:#000;letter-spacing:-0.6px;">2,902.81</div>
<div class="t" style="left:1037.00px;top:408.84px;width:59px;text-align:right;font-size:12px;line-height:12px;color:#000;letter-spacing:-0.6px;">2,902.81</div>
<div class="t" style="left:1096.00px;top:408.84px;width:58px;text-align:right;font-size:12px;line-height:12px;color:#000;letter-spacing:-0.6px;">2,902.81</div>
<div class="t" style="left:1154.00px;top:408.84px;width:59px;text-align:right;font-size:12px;line-height:12px;color:#000;letter-spacing:-0.6px;">2,902.81</div>
<div class="t" style="left:1213.00px;top:408.84px;width:59px;text-align:right;font-size:12px;line-height:12px;color:#000;letter-spacing:-0.6px;">2,902.81</div>
<div class="t" style="left:1272.00px;top:408.84px;width:59px;text-align:right;font-size:12px;line-height:12px;color:#000;letter-spacing:-0.6px;">2,902.81</div>
<div class="t" style="left:1331.00px;top:408.84px;width:59px;text-align:right;font-size:12px;line-height:12px;color:#000;letter-spacing:-0.6px;">2,902.81</div>
<div class="t" style="left:1390.00px;top:408.84px;width:59px;text-align:right;font-size:12px;line-height:12px;color:#000;letter-spacing:-0.6px;">2,902.81</div>
<div class="t" style="left:1449.00px;top:408.84px;width:59px;text-align:right;font-size:12px;line-height:12px;color:#000;letter-spacing:-0.6px;">2,902.81</div>
<div class="t" style="left:1508.00px;top:408.84px;width:88px;text-align:right;font-size:12px;line-height:12px;color:#000;letter-spacing:-0.6px;">34,833.72</div>
<div style="left:9px;top:425px;width:1590px;height:19px;background:#eeeeee;"></div>
<div style="left:90px;top:425px;width:1px;height:19px;background:#d6d6d6;"></div>
<div style="left:227px;top:425px;width:1px;height:19px;background:#d6d6d6;"></div>
<div style="left:344px;top:425px;width:1px;height:19px;background:#d6d6d6;"></div>
<div style="left:444px;top:425px;width:1px;height:19px;background:#d6d6d6;"></div>
<div style="left:522px;top:425px;width:1px;height:19px;background:#d6d6d6;"></div>
<div style="left:606px;top:425px;width:1px;height:19px;background:#d6d6d6;"></div>
<div style="left:698px;top:425px;width:1px;height:19px;background:#d6d6d6;"></div>
<div style="left:804px;top:425px;width:1px;height:19px;background:#d6d6d6;"></div>
<div style="left:863px;top:425px;width:1px;height:19px;background:#d6d6d6;"></div>
<div style="left:922px;top:425px;width:1px;height:19px;background:#d6d6d6;"></div>
<div style="left:981px;top:425px;width:1px;height:19px;background:#d6d6d6;"></div>
<div style="left:1040px;top:425px;width:1px;height:19px;background:#d6d6d6;"></div>
<div style="left:1099px;top:425px;width:1px;height:19px;background:#d6d6d6;"></div>
<div style="left:1157px;top:425px;width:1px;height:19px;background:#d6d6d6;"></div>
<div style="left:1216px;top:425px;width:1px;height:19px;background:#d6d6d6;"></div>
<div style="left:1275px;top:425px;width:1px;height:19px;background:#d6d6d6;"></div>
<div style="left:1334px;top:425px;width:1px;height:19px;background:#d6d6d6;"></div>
<div style="left:1393px;top:425px;width:1px;height:19px;background:#d6d6d6;"></div>
<div style="left:1452px;top:425px;width:1px;height:19px;background:#d6d6d6;"></div>
<div style="left:1511px;top:425px;width:1px;height:19px;background:#d6d6d6;"></div>
<div style="left:8px;top:425px;width:1px;height:20px;background:#d6d6d6;"></div>
<div style="left:1599px;top:425px;width:1px;height:20px;background:#d6d6d6;"></div>
<div style="left:3px;top:444px;width:6px;height:1px;background:#dedede;"></div>
<div class="t" style="left:95px;top:428.84px;font-size:12px;line-height:12px;color:#000;letter-spacing:-0.6px;">Total 302</div>
<div class="t" style="left:341.00px;top:428.84px;width:100px;text-align:right;font-size:12px;line-height:12px;color:#000;letter-spacing:-0.6px;">278,215.80</div>
<div class="t" style="left:519.00px;top:428.84px;width:84px;text-align:right;font-size:12px;line-height:12px;color:#000;letter-spacing:-0.6px;">292,126.59</div>
<div class="t" style="left:607.00px;top:428.84px;width:92px;text-align:center;font-size:12px;line-height:12px;color:#000;letter-spacing:-0.6px;">6.0</div>
<div class="t" style="left:801.00px;top:428.84px;width:59px;text-align:right;font-size:12px;line-height:12px;color:#000;letter-spacing:-0.6px;">24,343.88</div>
<div class="t" style="left:860.00px;top:428.84px;width:59px;text-align:right;font-size:12px;line-height:12px;color:#000;letter-spacing:-0.6px;">24,343.88</div>
<div class="t" style="left:919.00px;top:428.84px;width:59px;text-align:right;font-size:12px;line-height:12px;color:#000;letter-spacing:-0.6px;">24,343.88</div>
<div class="t" style="left:978.00px;top:428.84px;width:59px;text-align:right;font-size:12px;line-height:12px;color:#000;letter-spacing:-0.6px;">24,343.88</div>
<div class="t" style="left:1037.00px;top:428.84px;width:59px;text-align:right;font-size:12px;line-height:12px;color:#000;letter-spacing:-0.6px;">24,343.88</div>
<div class="t" style="left:1096.00px;top:428.84px;width:58px;text-align:right;font-size:12px;line-height:12px;color:#000;letter-spacing:-0.6px;">24,343.88</div>
<div class="t" style="left:1154.00px;top:428.84px;width:59px;text-align:right;font-size:12px;line-height:12px;color:#000;letter-spacing:-0.6px;">24,343.88</div>
<div class="t" style="left:1213.00px;top:428.84px;width:59px;text-align:right;font-size:12px;line-height:12px;color:#000;letter-spacing:-0.6px;">24,343.88</div>
<div class="t" style="left:1272.00px;top:428.84px;width:59px;text-align:right;font-size:12px;line-height:12px;color:#000;letter-spacing:-0.6px;">24,343.88</div>
<div class="t" style="left:1331.00px;top:428.84px;width:59px;text-align:right;font-size:12px;line-height:12px;color:#000;letter-spacing:-0.6px;">24,343.88</div>
<div class="t" style="left:1390.00px;top:428.84px;width:59px;text-align:right;font-size:12px;line-height:12px;color:#000;letter-spacing:-0.6px;">24,343.88</div>
<div class="t" style="left:1449.00px;top:428.84px;width:59px;text-align:right;font-size:12px;line-height:12px;color:#000;letter-spacing:-0.6px;">24,343.88</div>
<div class="t" style="left:1508.00px;top:428.84px;width:88px;text-align:right;font-size:12px;line-height:12px;color:#000;letter-spacing:-0.6px;">292,126.56</div>
<div style="left:9px;top:445px;width:1590px;height:19px;background:#ffffff;"></div>
<div style="left:9px;top:464px;width:1590px;height:1px;background:#dadada;"></div>
<div style="left:90px;top:445px;width:1px;height:19px;background:#dadada;"></div>
<div style="left:227px;top:445px;width:1px;height:19px;background:#dadada;"></div>
<div style="left:344px;top:445px;width:1px;height:19px;background:#dadada;"></div>
<div style="left:444px;top:445px;width:1px;height:19px;background:#dadada;"></div>
<div style="left:522px;top:445px;width:1px;height:19px;background:#dadada;"></div>
<div style="left:606px;top:445px;width:1px;height:19px;background:#dadada;"></div>
<div style="left:698px;top:445px;width:1px;height:19px;background:#dadada;"></div>
<div style="left:804px;top:445px;width:1px;height:19px;background:#dadada;"></div>
<div style="left:863px;top:445px;width:1px;height:19px;background:#dadada;"></div>
<div style="left:922px;top:445px;width:1px;height:19px;background:#dadada;"></div>
<div style="left:981px;top:445px;width:1px;height:19px;background:#dadada;"></div>
<div style="left:1040px;top:445px;width:1px;height:19px;background:#dadada;"></div>
<div style="left:1099px;top:445px;width:1px;height:19px;background:#dadada;"></div>
<div style="left:1157px;top:445px;width:1px;height:19px;background:#dadada;"></div>
<div style="left:1216px;top:445px;width:1px;height:19px;background:#dadada;"></div>
<div style="left:1275px;top:445px;width:1px;height:19px;background:#dadada;"></div>
<div style="left:1334px;top:445px;width:1px;height:19px;background:#dadada;"></div>
<div style="left:1393px;top:445px;width:1px;height:19px;background:#dadada;"></div>
<div style="left:1452px;top:445px;width:1px;height:19px;background:#dadada;"></div>
<div style="left:1511px;top:445px;width:1px;height:19px;background:#dadada;"></div>
<div style="left:1599px;top:445px;width:1px;height:20px;background:#dadada;"></div>
<div style="left:3px;top:464px;width:6px;height:1px;background:#dedede;"></div>
<div style="left:9px;top:445px;width:82px;height:20px;background:#ffffc0;border:1px solid #000;box-sizing:border-box;"></div>
<div style="left:445px;top:445px;width:78px;height:20px;background:#ffffc0;border:1px solid #000;box-sizing:border-box;"></div>
<div style="left:523px;top:445px;width:84px;height:20px;background:#ffffc0;border:1px solid #000;box-sizing:border-box;"></div>
<div style="left:607px;top:445px;width:92px;height:20px;background:#ffffc0;border:1px solid #000;box-sizing:border-box;"></div>
<div style="left:699px;top:445px;width:106px;height:20px;background:#ffffc0;border:1px solid #000;box-sizing:border-box;"></div>
<div style="left:805px;top:445px;width:59px;height:20px;background:#ffffc0;border:1px solid #000;box-sizing:border-box;"></div>
<div style="left:864px;top:445px;width:59px;height:20px;background:#ffffc0;border:1px solid #000;box-sizing:border-box;"></div>
<div style="left:923px;top:445px;width:59px;height:20px;background:#ffffc0;border:1px solid #000;box-sizing:border-box;"></div>
<div style="left:982px;top:445px;width:59px;height:20px;background:#ffffc0;border:1px solid #000;box-sizing:border-box;"></div>
<div style="left:1041px;top:445px;width:59px;height:20px;background:#ffffc0;border:1px solid #000;box-sizing:border-box;"></div>
<div style="left:1100px;top:445px;width:58px;height:20px;background:#ffffc0;border:1px solid #000;box-sizing:border-box;"></div>
<div style="left:1158px;top:445px;width:59px;height:20px;background:#ffffc0;border:1px solid #000;box-sizing:border-box;"></div>
<div style="left:1217px;top:445px;width:59px;height:20px;background:#ffffc0;border:1px solid #000;box-sizing:border-box;"></div>
<div style="left:1276px;top:445px;width:59px;height:20px;background:#ffffc0;border:1px solid #000;box-sizing:border-box;"></div>
<div style="left:1335px;top:445px;width:59px;height:20px;background:#ffffc0;border:1px solid #000;box-sizing:border-box;"></div>
<div style="left:1394px;top:445px;width:59px;height:20px;background:#ffffc0;border:1px solid #000;box-sizing:border-box;"></div>
<div style="left:1453px;top:445px;width:59px;height:20px;background:#ffffc0;border:1px solid #000;box-sizing:border-box;"></div>
<div class="t" style="left:13px;top:448.84px;font-size:12px;line-height:12px;color:#000;letter-spacing:-0.6px;">6001</div>
<div class="t" style="left:95px;top:448.84px;font-size:12px;line-height:12px;color:#000;letter-spacing:-0.6px;">303</div>
<div class="t" style="left:232px;top:448.84px;font-size:12px;line-height:12px;color:#000;letter-spacing:-0.6px;">Allen, Ray</div>
<div class="t" style="left:341.00px;top:448.84px;width:100px;text-align:right;font-size:12px;line-height:12px;color:#000;letter-spacing:-0.6px;">75,000.00</div>
<div class="t" style="left:441.00px;top:448.84px;width:78px;text-align:right;font-size:12px;line-height:12px;color:#000;letter-spacing:-0.6px;">10.00</div>
<div class="t" style="left:519.00px;top:448.84px;width:84px;text-align:right;font-size:12px;line-height:12px;color:#000;letter-spacing:-0.6px;">82,500.00</div>
<div class="t" style="left:607.00px;top:448.84px;width:92px;text-align:center;font-size:12px;line-height:12px;color:#000;letter-spacing:-0.6px;">1.0</div>
<div class="t" style="left:699.00px;top:448.84px;width:106px;text-align:center;font-size:12px;line-height:12px;color:#000;letter-spacing:-0.6px;">7</div>
<div class="t" style="left:801.00px;top:448.84px;width:59px;text-align:right;font-size:12px;line-height:12px;color:#000;letter-spacing:-0.6px;">6,250.00</div>
<div class="t" style="left:860.00px;top:448.84px;width:59px;text-align:right;font-size:12px;line-height:12px;color:#000;letter-spacing:-0.6px;">6,250.00</div>
<div class="t" style="left:919.00px;top:448.84px;width:59px;text-align:right;font-size:12px;line-height:12px;color:#000;letter-spacing:-0.6px;">6,250.00</div>
<div class="t" style="left:978.00px;top:448.84px;width:59px;text-align:right;font-size:12px;line-height:12px;color:#000;letter-spacing:-0.6px;">6,250.00</div>
<div class="t" style="left:1037.00px;top:448.84px;width:59px;text-align:right;font-size:12px;line-height:12px;color:#000;letter-spacing:-0.6px;">6,250.00</div>
<div class="t" style="left:1096.00px;top:448.84px;width:58px;text-align:right;font-size:12px;line-height:12px;color:#000;letter-spacing:-0.6px;">6,250.00</div>
<div class="t" style="left:1154.00px;top:448.84px;width:59px;text-align:right;font-size:12px;line-height:12px;color:#000;letter-spacing:-0.6px;">6,875.00</div>
<div class="t" style="left:1213.00px;top:448.84px;width:59px;text-align:right;font-size:12px;line-height:12px;color:#000;letter-spacing:-0.6px;">6,875.00</div>
<div class="t" style="left:1272.00px;top:448.84px;width:59px;text-align:right;font-size:12px;line-height:12px;color:#000;letter-spacing:-0.6px;">6,875.00</div>
<div class="t" style="left:1331.00px;top:448.84px;width:59px;text-align:right;font-size:12px;line-height:12px;color:#000;letter-spacing:-0.6px;">6,875.00</div>
<div class="t" style="left:1390.00px;top:448.84px;width:59px;text-align:right;font-size:12px;line-height:12px;color:#000;letter-spacing:-0.6px;">6,875.00</div>
<div class="t" style="left:1449.00px;top:448.84px;width:59px;text-align:right;font-size:12px;line-height:12px;color:#000;letter-spacing:-0.6px;">6,875.00</div>
<div class="t" style="left:1508.00px;top:448.84px;width:88px;text-align:right;font-size:12px;line-height:12px;color:#000;letter-spacing:-0.6px;">78,750.00</div>
<div style="left:9px;top:465px;width:1590px;height:19px;background:#ffffff;"></div>
<div style="left:9px;top:484px;width:1590px;height:1px;background:#dadada;"></div>
<div style="left:90px;top:465px;width:1px;height:19px;background:#dadada;"></div>
<div style="left:227px;top:465px;width:1px;height:19px;background:#dadada;"></div>
<div style="left:344px;top:465px;width:1px;height:19px;background:#dadada;"></div>
<div style="left:444px;top:465px;width:1px;height:19px;background:#dadada;"></div>
<div style="left:522px;top:465px;width:1px;height:19px;background:#dadada;"></div>
<div style="left:606px;top:465px;width:1px;height:19px;background:#dadada;"></div>
<div style="left:698px;top:465px;width:1px;height:19px;background:#dadada;"></div>
<div style="left:804px;top:465px;width:1px;height:19px;background:#dadada;"></div>
<div style="left:863px;top:465px;width:1px;height:19px;background:#dadada;"></div>
<div style="left:922px;top:465px;width:1px;height:19px;background:#dadada;"></div>
<div style="left:981px;top:465px;width:1px;height:19px;background:#dadada;"></div>
<div style="left:1040px;top:465px;width:1px;height:19px;background:#dadada;"></div>
<div style="left:1099px;top:465px;width:1px;height:19px;background:#dadada;"></div>
<div style="left:1157px;top:465px;width:1px;height:19px;background:#dadada;"></div>
<div style="left:1216px;top:465px;width:1px;height:19px;background:#dadada;"></div>
<div style="left:1275px;top:465px;width:1px;height:19px;background:#dadada;"></div>
<div style="left:1334px;top:465px;width:1px;height:19px;background:#dadada;"></div>
<div style="left:1393px;top:465px;width:1px;height:19px;background:#dadada;"></div>
<div style="left:1452px;top:465px;width:1px;height:19px;background:#dadada;"></div>
<div style="left:1511px;top:465px;width:1px;height:19px;background:#dadada;"></div>
<div style="left:1599px;top:465px;width:1px;height:20px;background:#dadada;"></div>
<div style="left:3px;top:484px;width:6px;height:1px;background:#dedede;"></div>
<div style="left:9px;top:465px;width:82px;height:20px;background:#ffffc0;border:1px solid #000;box-sizing:border-box;"></div>
<div style="left:445px;top:465px;width:78px;height:20px;background:#ffffc0;border:1px solid #000;box-sizing:border-box;"></div>
<div style="left:523px;top:465px;width:84px;height:20px;background:#ffffc0;border:1px solid #000;box-sizing:border-box;"></div>
<div style="left:607px;top:465px;width:92px;height:20px;background:#ffffc0;border:1px solid #000;box-sizing:border-box;"></div>
<div style="left:699px;top:465px;width:106px;height:20px;background:#ffffc0;border:1px solid #000;box-sizing:border-box;"></div>
<div style="left:805px;top:465px;width:59px;height:20px;background:#ffffc0;border:1px solid #000;box-sizing:border-box;"></div>
<div style="left:864px;top:465px;width:59px;height:20px;background:#ffffc0;border:1px solid #000;box-sizing:border-box;"></div>
<div style="left:923px;top:465px;width:59px;height:20px;background:#ffffc0;border:1px solid #000;box-sizing:border-box;"></div>
<div style="left:982px;top:465px;width:59px;height:20px;background:#ffffc0;border:1px solid #000;box-sizing:border-box;"></div>
<div style="left:1041px;top:465px;width:59px;height:20px;background:#ffffc0;border:1px solid #000;box-sizing:border-box;"></div>
<div style="left:1100px;top:465px;width:58px;height:20px;background:#ffffc0;border:1px solid #000;box-sizing:border-box;"></div>
<div style="left:1158px;top:465px;width:59px;height:20px;background:#ffffc0;border:1px solid #000;box-sizing:border-box;"></div>
<div style="left:1217px;top:465px;width:59px;height:20px;background:#ffffc0;border:1px solid #000;box-sizing:border-box;"></div>
<div style="left:1276px;top:465px;width:59px;height:20px;background:#ffffc0;border:1px solid #000;box-sizing:border-box;"></div>
<div style="left:1335px;top:465px;width:59px;height:20px;background:#ffffc0;border:1px solid #000;box-sizing:border-box;"></div>
<div style="left:1394px;top:465px;width:59px;height:20px;background:#ffffc0;border:1px solid #000;box-sizing:border-box;"></div>
<div style="left:1453px;top:465px;width:59px;height:20px;background:#ffffc0;border:1px solid #000;box-sizing:border-box;"></div>
<div class="t" style="left:13px;top:468.84px;font-size:12px;line-height:12px;color:#000;letter-spacing:-0.6px;">7708</div>
<div class="t" style="left:95px;top:468.84px;font-size:12px;line-height:12px;color:#000;letter-spacing:-0.6px;">303</div>
<div class="t" style="left:232px;top:468.84px;font-size:12px;line-height:12px;color:#000;letter-spacing:-0.6px;">Brown, Daniel</div>
<div class="t" style="left:341.00px;top:468.84px;width:100px;text-align:right;font-size:12px;line-height:12px;color:#000;letter-spacing:-0.6px;">53,000.00</div>
<div class="t" style="left:441.00px;top:468.84px;width:78px;text-align:right;font-size:12px;line-height:12px;color:#000;letter-spacing:-0.6px;">10.00</div>
<div class="t" style="left:519.00px;top:468.84px;width:84px;text-align:right;font-size:12px;line-height:12px;color:#000;letter-spacing:-0.6px;">58,300.00</div>
<div class="t" style="left:607.00px;top:468.84px;width:92px;text-align:center;font-size:12px;line-height:12px;color:#000;letter-spacing:-0.6px;">1.0</div>
<div class="t" style="left:699.00px;top:468.84px;width:106px;text-align:center;font-size:12px;line-height:12px;color:#000;letter-spacing:-0.6px;">7</div>
<div class="t" style="left:801.00px;top:468.84px;width:59px;text-align:right;font-size:12px;line-height:12px;color:#000;letter-spacing:-0.6px;">4,416.67</div>
<div class="t" style="left:860.00px;top:468.84px;width:59px;text-align:right;font-size:12px;line-height:12px;color:#000;letter-spacing:-0.6px;">4,416.67</div>
<div class="t" style="left:919.00px;top:468.84px;width:59px;text-align:right;font-size:12px;line-height:12px;color:#000;letter-spacing:-0.6px;">4,416.67</div>
<div class="t" style="left:978.00px;top:468.84px;width:59px;text-align:right;font-size:12px;line-height:12px;color:#000;letter-spacing:-0.6px;">4,416.67</div>
<div class="t" style="left:1037.00px;top:468.84px;width:59px;text-align:right;font-size:12px;line-height:12px;color:#000;letter-spacing:-0.6px;">4,416.67</div>
<div class="t" style="left:1096.00px;top:468.84px;width:58px;text-align:right;font-size:12px;line-height:12px;color:#000;letter-spacing:-0.6px;">4,416.67</div>
<div class="t" style="left:1154.00px;top:468.84px;width:59px;text-align:right;font-size:12px;line-height:12px;color:#000;letter-spacing:-0.6px;">4,858.33</div>
<div class="t" style="left:1213.00px;top:468.84px;width:59px;text-align:right;font-size:12px;line-height:12px;color:#000;letter-spacing:-0.6px;">4,858.33</div>
<div class="t" style="left:1272.00px;top:468.84px;width:59px;text-align:right;font-size:12px;line-height:12px;color:#000;letter-spacing:-0.6px;">4,858.33</div>
<div class="t" style="left:1331.00px;top:468.84px;width:59px;text-align:right;font-size:12px;line-height:12px;color:#000;letter-spacing:-0.6px;">4,858.33</div>
<div class="t" style="left:1390.00px;top:468.84px;width:59px;text-align:right;font-size:12px;line-height:12px;color:#000;letter-spacing:-0.6px;">4,858.33</div>
<div class="t" style="left:1449.00px;top:468.84px;width:59px;text-align:right;font-size:12px;line-height:12px;color:#000;letter-spacing:-0.6px;">4,858.33</div>
<div class="t" style="left:1508.00px;top:468.84px;width:88px;text-align:right;font-size:12px;line-height:12px;color:#000;letter-spacing:-0.6px;">55,650.00</div>
<div style="left:9px;top:485px;width:1590px;height:19px;background:#ffffff;"></div>
<div style="left:9px;top:504px;width:1590px;height:1px;background:#dadada;"></div>
<div style="left:90px;top:485px;width:1px;height:19px;background:#dadada;"></div>
<div style="left:227px;top:485px;width:1px;height:19px;background:#dadada;"></div>
<div style="left:344px;top:485px;width:1px;height:19px;background:#dadada;"></div>
<div style="left:444px;top:485px;width:1px;height:19px;background:#dadada;"></div>
<div style="left:522px;top:485px;width:1px;height:19px;background:#dadada;"></div>
<div style="left:606px;top:485px;width:1px;height:19px;background:#dadada;"></div>
<div style="left:698px;top:485px;width:1px;height:19px;background:#dadada;"></div>
<div style="left:804px;top:485px;width:1px;height:19px;background:#dadada;"></div>
<div style="left:863px;top:485px;width:1px;height:19px;background:#dadada;"></div>
<div style="left:922px;top:485px;width:1px;height:19px;background:#dadada;"></div>
<div style="left:981px;top:485px;width:1px;height:19px;background:#dadada;"></div>
<div style="left:1040px;top:485px;width:1px;height:19px;background:#dadada;"></div>
<div style="left:1099px;top:485px;width:1px;height:19px;background:#dadada;"></div>
<div style="left:1157px;top:485px;width:1px;height:19px;background:#dadada;"></div>
<div style="left:1216px;top:485px;width:1px;height:19px;background:#dadada;"></div>
<div style="left:1275px;top:485px;width:1px;height:19px;background:#dadada;"></div>
<div style="left:1334px;top:485px;width:1px;height:19px;background:#dadada;"></div>
<div style="left:1393px;top:485px;width:1px;height:19px;background:#dadada;"></div>
<div style="left:1452px;top:485px;width:1px;height:19px;background:#dadada;"></div>
<div style="left:1511px;top:485px;width:1px;height:19px;background:#dadada;"></div>
<div style="left:1599px;top:485px;width:1px;height:20px;background:#dadada;"></div>
<div style="left:3px;top:504px;width:6px;height:1px;background:#dedede;"></div>
<div style="left:9px;top:485px;width:82px;height:20px;background:#ffffc0;border:1px solid #000;box-sizing:border-box;"></div>
<div style="left:445px;top:485px;width:78px;height:20px;background:#ffffc0;border:1px solid #000;box-sizing:border-box;"></div>
<div style="left:523px;top:485px;width:84px;height:20px;background:#ffffc0;border:1px solid #000;box-sizing:border-box;"></div>
<div style="left:607px;top:485px;width:92px;height:20px;background:#ffffc0;border:1px solid #000;box-sizing:border-box;"></div>
<div style="left:699px;top:485px;width:106px;height:20px;background:#ffffc0;border:1px solid #000;box-sizing:border-box;"></div>
<div style="left:805px;top:485px;width:59px;height:20px;background:#ffffc0;border:1px solid #000;box-sizing:border-box;"></div>
<div style="left:864px;top:485px;width:59px;height:20px;background:#ffffc0;border:1px solid #000;box-sizing:border-box;"></div>
<div style="left:923px;top:485px;width:59px;height:20px;background:#ffffc0;border:1px solid #000;box-sizing:border-box;"></div>
<div style="left:982px;top:485px;width:59px;height:20px;background:#ffffc0;border:1px solid #000;box-sizing:border-box;"></div>
<div style="left:1041px;top:485px;width:59px;height:20px;background:#ffffc0;border:1px solid #000;box-sizing:border-box;"></div>
<div style="left:1100px;top:485px;width:58px;height:20px;background:#ffffc0;border:1px solid #000;box-sizing:border-box;"></div>
<div style="left:1158px;top:485px;width:59px;height:20px;background:#ffffc0;border:1px solid #000;box-sizing:border-box;"></div>
<div style="left:1217px;top:485px;width:59px;height:20px;background:#ffffc0;border:1px solid #000;box-sizing:border-box;"></div>
<div style="left:1276px;top:485px;width:59px;height:20px;background:#ffffc0;border:1px solid #000;box-sizing:border-box;"></div>
<div style="left:1335px;top:485px;width:59px;height:20px;background:#ffffc0;border:1px solid #000;box-sizing:border-box;"></div>
<div style="left:1394px;top:485px;width:59px;height:20px;background:#ffffc0;border:1px solid #000;box-sizing:border-box;"></div>
<div style="left:1453px;top:485px;width:59px;height:20px;background:#ffffc0;border:1px solid #000;box-sizing:border-box;"></div>
<div class="t" style="left:13px;top:488.84px;font-size:12px;line-height:12px;color:#000;letter-spacing:-0.6px;">7564</div>
<div class="t" style="left:95px;top:488.84px;font-size:12px;line-height:12px;color:#000;letter-spacing:-0.6px;">303</div>
<div class="t" style="left:232px;top:488.84px;font-size:12px;line-height:12px;color:#000;letter-spacing:-0.6px;">Chamberlain, Carol M.</div>
<div class="t" style="left:341.00px;top:488.84px;width:100px;text-align:right;font-size:12px;line-height:12px;color:#000;letter-spacing:-0.6px;">32,000.00</div>
<div class="t" style="left:441.00px;top:488.84px;width:78px;text-align:right;font-size:12px;line-height:12px;color:#000;letter-spacing:-0.6px;">10.00</div>
<div class="t" style="left:519.00px;top:488.84px;width:84px;text-align:right;font-size:12px;line-height:12px;color:#000;letter-spacing:-0.6px;">35,200.00</div>
<div class="t" style="left:607.00px;top:488.84px;width:92px;text-align:center;font-size:12px;line-height:12px;color:#000;letter-spacing:-0.6px;">1.0</div>
<div class="t" style="left:699.00px;top:488.84px;width:106px;text-align:center;font-size:12px;line-height:12px;color:#000;letter-spacing:-0.6px;">7</div>
<div class="t" style="left:801.00px;top:488.84px;width:59px;text-align:right;font-size:12px;line-height:12px;color:#000;letter-spacing:-0.6px;">2,666.67</div>
<div class="t" style="left:860.00px;top:488.84px;width:59px;text-align:right;font-size:12px;line-height:12px;color:#000;letter-spacing:-0.6px;">2,666.67</div>
<div class="t" style="left:919.00px;top:488.84px;width:59px;text-align:right;font-size:12px;line-height:12px;color:#000;letter-spacing:-0.6px;">2,666.67</div>
<div class="t" style="left:978.00px;top:488.84px;width:59px;text-align:right;font-size:12px;line-height:12px;color:#000;letter-spacing:-0.6px;">2,666.67</div>
<div class="t" style="left:1037.00px;top:488.84px;width:59px;text-align:right;font-size:12px;line-height:12px;color:#000;letter-spacing:-0.6px;">2,666.67</div>
<div class="t" style="left:1096.00px;top:488.84px;width:58px;text-align:right;font-size:12px;line-height:12px;color:#000;letter-spacing:-0.6px;">2,666.67</div>
<div class="t" style="left:1154.00px;top:488.84px;width:59px;text-align:right;font-size:12px;line-height:12px;color:#000;letter-spacing:-0.6px;">2,933.33</div>
<div class="t" style="left:1213.00px;top:488.84px;width:59px;text-align:right;font-size:12px;line-height:12px;color:#000;letter-spacing:-0.6px;">2,933.33</div>
<div class="t" style="left:1272.00px;top:488.84px;width:59px;text-align:right;font-size:12px;line-height:12px;color:#000;letter-spacing:-0.6px;">2,933.33</div>
<div class="t" style="left:1331.00px;top:488.84px;width:59px;text-align:right;font-size:12px;line-height:12px;color:#000;letter-spacing:-0.6px;">2,933.33</div>
<div class="t" style="left:1390.00px;top:488.84px;width:59px;text-align:right;font-size:12px;line-height:12px;color:#000;letter-spacing:-0.6px;">2,933.33</div>
<div class="t" style="left:1449.00px;top:488.84px;width:59px;text-align:right;font-size:12px;line-height:12px;color:#000;letter-spacing:-0.6px;">2,933.33</div>
<div class="t" style="left:1508.00px;top:488.84px;width:88px;text-align:right;font-size:12px;line-height:12px;color:#000;letter-spacing:-0.6px;">33,600.00</div>
<div style="left:9px;top:505px;width:1590px;height:19px;background:#eeeeee;"></div>
<div style="left:90px;top:505px;width:1px;height:19px;background:#d6d6d6;"></div>
<div style="left:227px;top:505px;width:1px;height:19px;background:#d6d6d6;"></div>
<div style="left:344px;top:505px;width:1px;height:19px;background:#d6d6d6;"></div>
<div style="left:444px;top:505px;width:1px;height:19px;background:#d6d6d6;"></div>
<div style="left:522px;top:505px;width:1px;height:19px;background:#d6d6d6;"></div>
<div style="left:606px;top:505px;width:1px;height:19px;background:#d6d6d6;"></div>
<div style="left:698px;top:505px;width:1px;height:19px;background:#d6d6d6;"></div>
<div style="left:804px;top:505px;width:1px;height:19px;background:#d6d6d6;"></div>
<div style="left:863px;top:505px;width:1px;height:19px;background:#d6d6d6;"></div>
<div style="left:922px;top:505px;width:1px;height:19px;background:#d6d6d6;"></div>
<div style="left:981px;top:505px;width:1px;height:19px;background:#d6d6d6;"></div>
<div style="left:1040px;top:505px;width:1px;height:19px;background:#d6d6d6;"></div>
<div style="left:1099px;top:505px;width:1px;height:19px;background:#d6d6d6;"></div>
<div style="left:1157px;top:505px;width:1px;height:19px;background:#d6d6d6;"></div>
<div style="left:1216px;top:505px;width:1px;height:19px;background:#d6d6d6;"></div>
<div style="left:1275px;top:505px;width:1px;height:19px;background:#d6d6d6;"></div>
<div style="left:1334px;top:505px;width:1px;height:19px;background:#d6d6d6;"></div>
<div style="left:1393px;top:505px;width:1px;height:19px;background:#d6d6d6;"></div>
<div style="left:1452px;top:505px;width:1px;height:19px;background:#d6d6d6;"></div>
<div style="left:1511px;top:505px;width:1px;height:19px;background:#d6d6d6;"></div>
<div style="left:8px;top:505px;width:1px;height:20px;background:#d6d6d6;"></div>
<div style="left:1599px;top:505px;width:1px;height:20px;background:#d6d6d6;"></div>
<div style="left:3px;top:524px;width:6px;height:1px;background:#dedede;"></div>
<div class="t" style="left:95px;top:508.84px;font-size:12px;line-height:12px;color:#000;letter-spacing:-0.6px;">Total 303</div>
<div class="t" style="left:341.00px;top:508.84px;width:100px;text-align:right;font-size:12px;line-height:12px;color:#000;letter-spacing:-0.6px;">160,000.00</div>
<div class="t" style="left:519.00px;top:508.84px;width:84px;text-align:right;font-size:12px;line-height:12px;color:#000;letter-spacing:-0.6px;">176,000.00</div>
<div class="t" style="left:607.00px;top:508.84px;width:92px;text-align:center;font-size:12px;line-height:12px;color:#000;letter-spacing:-0.6px;">3.0</div>
<div class="t" style="left:801.00px;top:508.84px;width:59px;text-align:right;font-size:12px;line-height:12px;color:#000;letter-spacing:-0.6px;">13,333.34</div>
<div class="t" style="left:860.00px;top:508.84px;width:59px;text-align:right;font-size:12px;line-height:12px;color:#000;letter-spacing:-0.6px;">13,333.34</div>
<div class="t" style="left:919.00px;top:508.84px;width:59px;text-align:right;font-size:12px;line-height:12px;color:#000;letter-spacing:-0.6px;">13,333.34</div>
<div class="t" style="left:978.00px;top:508.84px;width:59px;text-align:right;font-size:12px;line-height:12px;color:#000;letter-spacing:-0.6px;">13,333.34</div>
<div class="t" style="left:1037.00px;top:508.84px;width:59px;text-align:right;font-size:12px;line-height:12px;color:#000;letter-spacing:-0.6px;">13,333.34</div>
<div class="t" style="left:1096.00px;top:508.84px;width:58px;text-align:right;font-size:12px;line-height:12px;color:#000;letter-spacing:-0.6px;">13,333.34</div>
<div class="t" style="left:1154.00px;top:508.84px;width:59px;text-align:right;font-size:12px;line-height:12px;color:#000;letter-spacing:-0.6px;">14,666.66</div>
<div class="t" style="left:1213.00px;top:508.84px;width:59px;text-align:right;font-size:12px;line-height:12px;color:#000;letter-spacing:-0.6px;">14,666.66</div>
<div class="t" style="left:1272.00px;top:508.84px;width:59px;text-align:right;font-size:12px;line-height:12px;color:#000;letter-spacing:-0.6px;">14,666.66</div>
<div class="t" style="left:1331.00px;top:508.84px;width:59px;text-align:right;font-size:12px;line-height:12px;color:#000;letter-spacing:-0.6px;">14,666.66</div>
<div class="t" style="left:1390.00px;top:508.84px;width:59px;text-align:right;font-size:12px;line-height:12px;color:#000;letter-spacing:-0.6px;">14,666.66</div>
<div class="t" style="left:1449.00px;top:508.84px;width:59px;text-align:right;font-size:12px;line-height:12px;color:#000;letter-spacing:-0.6px;">14,666.66</div>
<div class="t" style="left:1508.00px;top:508.84px;width:88px;text-align:right;font-size:12px;line-height:12px;color:#000;letter-spacing:-0.6px;">168,000.00</div>
<div style="left:9px;top:525px;width:1590px;height:19px;background:#ffffff;"></div>
<div style="left:9px;top:544px;width:1590px;height:1px;background:#dadada;"></div>
<div style="left:90px;top:525px;width:1px;height:19px;background:#dadada;"></div>
<div style="left:227px;top:525px;width:1px;height:19px;background:#dadada;"></div>
<div style="left:344px;top:525px;width:1px;height:19px;background:#dadada;"></div>
<div style="left:444px;top:525px;width:1px;height:19px;background:#dadada;"></div>
<div style="left:522px;top:525px;width:1px;height:19px;background:#dadada;"></div>
<div style="left:606px;top:525px;width:1px;height:19px;background:#dadada;"></div>
<div style="left:698px;top:525px;width:1px;height:19px;background:#dadada;"></div>
<div style="left:804px;top:525px;width:1px;height:19px;background:#dadada;"></div>
<div style="left:863px;top:525px;width:1px;height:19px;background:#dadada;"></div>
<div style="left:922px;top:525px;width:1px;height:19px;background:#dadada;"></div>
<div style="left:981px;top:525px;width:1px;height:19px;background:#dadada;"></div>
<div style="left:1040px;top:525px;width:1px;height:19px;background:#dadada;"></div>
<div style="left:1099px;top:525px;width:1px;height:19px;background:#dadada;"></div>
<div style="left:1157px;top:525px;width:1px;height:19px;background:#dadada;"></div>
<div style="left:1216px;top:525px;width:1px;height:19px;background:#dadada;"></div>
<div style="left:1275px;top:525px;width:1px;height:19px;background:#dadada;"></div>
<div style="left:1334px;top:525px;width:1px;height:19px;background:#dadada;"></div>
<div style="left:1393px;top:525px;width:1px;height:19px;background:#dadada;"></div>
<div style="left:1452px;top:525px;width:1px;height:19px;background:#dadada;"></div>
<div style="left:1511px;top:525px;width:1px;height:19px;background:#dadada;"></div>
<div style="left:1599px;top:525px;width:1px;height:20px;background:#dadada;"></div>
<div style="left:3px;top:544px;width:6px;height:1px;background:#dedede;"></div>
<div style="left:9px;top:525px;width:82px;height:20px;background:#ffffc0;border:1px solid #000;box-sizing:border-box;"></div>
<div style="left:445px;top:525px;width:78px;height:20px;background:#ffffc0;border:1px solid #000;box-sizing:border-box;"></div>
<div style="left:523px;top:525px;width:84px;height:20px;background:#ffffc0;border:1px solid #000;box-sizing:border-box;"></div>
<div style="left:607px;top:525px;width:92px;height:20px;background:#ffffc0;border:1px solid #000;box-sizing:border-box;"></div>
<div style="left:699px;top:525px;width:106px;height:20px;background:#ffffc0;border:1px solid #000;box-sizing:border-box;"></div>
<div style="left:805px;top:525px;width:59px;height:20px;background:#ffffc0;border:1px solid #000;box-sizing:border-box;"></div>
<div style="left:864px;top:525px;width:59px;height:20px;background:#ffffc0;border:1px solid #000;box-sizing:border-box;"></div>
<div style="left:923px;top:525px;width:59px;height:20px;background:#ffffc0;border:1px solid #000;box-sizing:border-box;"></div>
<div style="left:982px;top:525px;width:59px;height:20px;background:#ffffc0;border:1px solid #000;box-sizing:border-box;"></div>
<div style="left:1041px;top:525px;width:59px;height:20px;background:#ffffc0;border:1px solid #000;box-sizing:border-box;"></div>
<div style="left:1100px;top:525px;width:58px;height:20px;background:#ffffc0;border:1px solid #000;box-sizing:border-box;"></div>
<div style="left:1158px;top:525px;width:59px;height:20px;background:#ffffc0;border:1px solid #000;box-sizing:border-box;"></div>
<div style="left:1217px;top:525px;width:59px;height:20px;background:#ffffc0;border:1px solid #000;box-sizing:border-box;"></div>
<div style="left:1276px;top:525px;width:59px;height:20px;background:#ffffc0;border:1px solid #000;box-sizing:border-box;"></div>
<div style="left:1335px;top:525px;width:59px;height:20px;background:#ffffc0;border:1px solid #000;box-sizing:border-box;"></div>
<div style="left:1394px;top:525px;width:59px;height:20px;background:#ffffc0;border:1px solid #000;box-sizing:border-box;"></div>
<div style="left:1453px;top:525px;width:59px;height:20px;background:#ffffc0;border:1px solid #000;box-sizing:border-box;"></div>
<div class="t" style="left:13px;top:528.84px;font-size:12px;line-height:12px;color:#000;letter-spacing:-0.6px;">6832</div>
<div class="t" style="left:95px;top:528.84px;font-size:12px;line-height:12px;color:#000;letter-spacing:-0.6px;">304</div>
<div class="t" style="left:232px;top:528.84px;font-size:12px;line-height:12px;color:#000;letter-spacing:-0.6px;">Ato, Connie</div>
<div class="t" style="left:341.00px;top:528.84px;width:100px;text-align:right;font-size:12px;line-height:12px;color:#000;letter-spacing:-0.6px;">38,250.00</div>
<div class="t" style="left:441.00px;top:528.84px;width:78px;text-align:right;font-size:12px;line-height:12px;color:#000;letter-spacing:-0.6px;">20.00</div>
<div class="t" style="left:519.00px;top:528.84px;width:84px;text-align:right;font-size:12px;line-height:12px;color:#000;letter-spacing:-0.6px;">45,900.00</div>
<div class="t" style="left:607.00px;top:528.84px;width:92px;text-align:center;font-size:12px;line-height:12px;color:#000;letter-spacing:-0.6px;">1.0</div>
<div class="t" style="left:699.00px;top:528.84px;width:106px;text-align:center;font-size:12px;line-height:12px;color:#000;letter-spacing:-0.6px;">10</div>
<div class="t" style="left:801.00px;top:528.84px;width:59px;text-align:right;font-size:12px;line-height:12px;color:#000;letter-spacing:-0.6px;">3,187.50</div>
<div class="t" style="left:860.00px;top:528.84px;width:59px;text-align:right;font-size:12px;line-height:12px;color:#000;letter-spacing:-0.6px;">3,187.50</div>
<div class="t" style="left:919.00px;top:528.84px;width:59px;text-align:right;font-size:12px;line-height:12px;color:#000;letter-spacing:-0.6px;">3,187.50</div>
<div class="t" style="left:978.00px;top:528.84px;width:59px;text-align:right;font-size:12px;line-height:12px;color:#000;letter-spacing:-0.6px;">3,187.50</div>
<div class="t" style="left:1037.00px;top:528.84px;width:59px;text-align:right;font-size:12px;line-height:12px;color:#000;letter-spacing:-0.6px;">3,187.50</div>
<div class="t" style="left:1096.00px;top:528.84px;width:58px;text-align:right;font-size:12px;line-height:12px;color:#000;letter-spacing:-0.6px;">3,187.50</div>
<div class="t" style="left:1154.00px;top:528.84px;width:59px;text-align:right;font-size:12px;line-height:12px;color:#000;letter-spacing:-0.6px;">3,187.50</div>
<div class="t" style="left:1213.00px;top:528.84px;width:59px;text-align:right;font-size:12px;line-height:12px;color:#000;letter-spacing:-0.6px;">3,187.50</div>
<div class="t" style="left:1272.00px;top:528.84px;width:59px;text-align:right;font-size:12px;line-height:12px;color:#000;letter-spacing:-0.6px;">3,187.50</div>
<div class="t" style="left:1331.00px;top:528.84px;width:59px;text-align:right;font-size:12px;line-height:12px;color:#000;letter-spacing:-0.6px;">3,825.00</div>
<div class="t" style="left:1390.00px;top:528.84px;width:59px;text-align:right;font-size:12px;line-height:12px;color:#000;letter-spacing:-0.6px;">3,825.00</div>
<div class="t" style="left:1449.00px;top:528.84px;width:59px;text-align:right;font-size:12px;line-height:12px;color:#000;letter-spacing:-0.6px;">3,825.00</div>
<div class="t" style="left:1508.00px;top:528.84px;width:88px;text-align:right;font-size:12px;line-height:12px;color:#000;letter-spacing:-0.6px;">40,162.50</div>
<div style="left:9px;top:545px;width:1590px;height:19px;background:#ffffff;"></div>
<div style="left:9px;top:564px;width:1590px;height:1px;background:#dadada;"></div>
<div style="left:90px;top:545px;width:1px;height:19px;background:#dadada;"></div>
<div style="left:227px;top:545px;width:1px;height:19px;background:#dadada;"></div>
<div style="left:344px;top:545px;width:1px;height:19px;background:#dadada;"></div>
<div style="left:444px;top:545px;width:1px;height:19px;background:#dadada;"></div>
<div style="left:522px;top:545px;width:1px;height:19px;background:#dadada;"></div>
<div style="left:606px;top:545px;width:1px;height:19px;background:#dadada;"></div>
<div style="left:698px;top:545px;width:1px;height:19px;background:#dadada;"></div>
<div style="left:804px;top:545px;width:1px;height:19px;background:#dadada;"></div>
<div style="left:863px;top:545px;width:1px;height:19px;background:#dadada;"></div>
<div style="left:922px;top:545px;width:1px;height:19px;background:#dadada;"></div>
<div style="left:981px;top:545px;width:1px;height:19px;background:#dadada;"></div>
<div style="left:1040px;top:545px;width:1px;height:19px;background:#dadada;"></div>
<div style="left:1099px;top:545px;width:1px;height:19px;background:#dadada;"></div>
<div style="left:1157px;top:545px;width:1px;height:19px;background:#dadada;"></div>
<div style="left:1216px;top:545px;width:1px;height:19px;background:#dadada;"></div>
<div style="left:1275px;top:545px;width:1px;height:19px;background:#dadada;"></div>
<div style="left:1334px;top:545px;width:1px;height:19px;background:#dadada;"></div>
<div style="left:1393px;top:545px;width:1px;height:19px;background:#dadada;"></div>
<div style="left:1452px;top:545px;width:1px;height:19px;background:#dadada;"></div>
<div style="left:1511px;top:545px;width:1px;height:19px;background:#dadada;"></div>
<div style="left:1599px;top:545px;width:1px;height:20px;background:#dadada;"></div>
<div style="left:3px;top:564px;width:6px;height:1px;background:#dedede;"></div>
<div style="left:9px;top:545px;width:82px;height:20px;background:#ffffc0;border:1px solid #000;box-sizing:border-box;"></div>
<div style="left:445px;top:545px;width:78px;height:20px;background:#ffffc0;border:1px solid #000;box-sizing:border-box;"></div>
<div style="left:523px;top:545px;width:84px;height:20px;background:#ffffc0;border:1px solid #000;box-sizing:border-box;"></div>
<div style="left:607px;top:545px;width:92px;height:20px;background:#ffffc0;border:1px solid #000;box-sizing:border-box;"></div>
<div style="left:699px;top:545px;width:106px;height:20px;background:#ffffc0;border:1px solid #000;box-sizing:border-box;"></div>
<div style="left:805px;top:545px;width:59px;height:20px;background:#ffffc0;border:1px solid #000;box-sizing:border-box;"></div>
<div style="left:864px;top:545px;width:59px;height:20px;background:#ffffc0;border:1px solid #000;box-sizing:border-box;"></div>
<div style="left:923px;top:545px;width:59px;height:20px;background:#ffffc0;border:1px solid #000;box-sizing:border-box;"></div>
<div style="left:982px;top:545px;width:59px;height:20px;background:#ffffc0;border:1px solid #000;box-sizing:border-box;"></div>
<div style="left:1041px;top:545px;width:59px;height:20px;background:#ffffc0;border:1px solid #000;box-sizing:border-box;"></div>
<div style="left:1100px;top:545px;width:58px;height:20px;background:#ffffc0;border:1px solid #000;box-sizing:border-box;"></div>
<div style="left:1158px;top:545px;width:59px;height:20px;background:#ffffc0;border:1px solid #000;box-sizing:border-box;"></div>
<div style="left:1217px;top:545px;width:59px;height:20px;background:#ffffc0;border:1px solid #000;box-sizing:border-box;"></div>
<div style="left:1276px;top:545px;width:59px;height:20px;background:#ffffc0;border:1px solid #000;box-sizing:border-box;"></div>
<div style="left:1335px;top:545px;width:59px;height:20px;background:#ffffc0;border:1px solid #000;box-sizing:border-box;"></div>
<div style="left:1394px;top:545px;width:59px;height:20px;background:#ffffc0;border:1px solid #000;box-sizing:border-box;"></div>
<div style="left:1453px;top:545px;width:59px;height:20px;background:#ffffc0;border:1px solid #000;box-sizing:border-box;"></div>
<div class="t" style="left:13px;top:548.84px;font-size:12px;line-height:12px;color:#000;letter-spacing:-0.6px;">4801</div>
<div class="t" style="left:95px;top:548.84px;font-size:12px;line-height:12px;color:#000;letter-spacing:-0.6px;">304</div>
<div class="t" style="left:232px;top:548.84px;font-size:12px;line-height:12px;color:#000;letter-spacing:-0.6px;">Breton, Josephine</div>
<div class="t" style="left:341.00px;top:548.84px;width:100px;text-align:right;font-size:12px;line-height:12px;color:#000;letter-spacing:-0.6px;">31,200.00</div>
<div class="t" style="left:441.00px;top:548.84px;width:78px;text-align:right;font-size:12px;line-height:12px;color:#000;letter-spacing:-0.6px;">20.00</div>
<div class="t" style="left:519.00px;top:548.84px;width:84px;text-align:right;font-size:12px;line-height:12px;color:#000;letter-spacing:-0.6px;">37,440.00</div>
<div class="t" style="left:607.00px;top:548.84px;width:92px;text-align:center;font-size:12px;line-height:12px;color:#000;letter-spacing:-0.6px;">1.0</div>
<div class="t" style="left:699.00px;top:548.84px;width:106px;text-align:center;font-size:12px;line-height:12px;color:#000;letter-spacing:-0.6px;">10</div>
<div class="t" style="left:801.00px;top:548.84px;width:59px;text-align:right;font-size:12px;line-height:12px;color:#000;letter-spacing:-0.6px;">2,600.00</div>
<div class="t" style="left:860.00px;top:548.84px;width:59px;text-align:right;font-size:12px;line-height:12px;color:#000;letter-spacing:-0.6px;">2,600.00</div>
<div class="t" style="left:919.00px;top:548.84px;width:59px;text-align:right;font-size:12px;line-height:12px;color:#000;letter-spacing:-0.6px;">2,600.00</div>
<div class="t" style="left:978.00px;top:548.84px;width:59px;text-align:right;font-size:12px;line-height:12px;color:#000;letter-spacing:-0.6px;">2,600.00</div>
<div class="t" style="left:1037.00px;top:548.84px;width:59px;text-align:right;font-size:12px;line-height:12px;color:#000;letter-spacing:-0.6px;">2,600.00</div>
<div class="t" style="left:1096.00px;top:548.84px;width:58px;text-align:right;font-size:12px;line-height:12px;color:#000;letter-spacing:-0.6px;">2,600.00</div>
<div class="t" style="left:1154.00px;top:548.84px;width:59px;text-align:right;font-size:12px;line-height:12px;color:#000;letter-spacing:-0.6px;">2,600.00</div>
<div class="t" style="left:1213.00px;top:548.84px;width:59px;text-align:right;font-size:12px;line-height:12px;color:#000;letter-spacing:-0.6px;">2,600.00</div>
<div class="t" style="left:1272.00px;top:548.84px;width:59px;text-align:right;font-size:12px;line-height:12px;color:#000;letter-spacing:-0.6px;">2,600.00</div>
<div class="t" style="left:1331.00px;top:548.84px;width:59px;text-align:right;font-size:12px;line-height:12px;color:#000;letter-spacing:-0.6px;">3,120.00</div>
<div class="t" style="left:1390.00px;top:548.84px;width:59px;text-align:right;font-size:12px;line-height:12px;color:#000;letter-spacing:-0.6px;">3,120.00</div>
<div class="t" style="left:1449.00px;top:548.84px;width:59px;text-align:right;font-size:12px;line-height:12px;color:#000;letter-spacing:-0.6px;">3,120.00</div>
<div class="t" style="left:1508.00px;top:548.84px;width:88px;text-align:right;font-size:12px;line-height:12px;color:#000;letter-spacing:-0.6px;">32,760.00</div>
<div style="left:9px;top:565px;width:1590px;height:19px;background:#ffffff;"></div>
<div style="left:9px;top:584px;width:1590px;height:1px;background:#dadada;"></div>
<div style="left:90px;top:565px;width:1px;height:19px;background:#dadada;"></div>
<div style="left:227px;top:565px;width:1px;height:19px;background:#dadada;"></div>
<div style="left:344px;top:565px;width:1px;height:19px;background:#dadada;"></div>
<div style="left:444px;top:565px;width:1px;height:19px;background:#dadada;"></div>
<div style="left:522px;top:565px;width:1px;height:19px;background:#dadada;"></div>
<div style="left:606px;top:565px;width:1px;height:19px;background:#dadada;"></div>
<div style="left:698px;top:565px;width:1px;height:19px;background:#dadada;"></div>
<div style="left:804px;top:565px;width:1px;height:19px;background:#dadada;"></div>
<div style="left:863px;top:565px;width:1px;height:19px;background:#dadada;"></div>
<div style="left:922px;top:565px;width:1px;height:19px;background:#dadada;"></div>
<div style="left:981px;top:565px;width:1px;height:19px;background:#dadada;"></div>
<div style="left:1040px;top:565px;width:1px;height:19px;background:#dadada;"></div>
<div style="left:1099px;top:565px;width:1px;height:19px;background:#dadada;"></div>
<div style="left:1157px;top:565px;width:1px;height:19px;background:#dadada;"></div>
<div style="left:1216px;top:565px;width:1px;height:19px;background:#dadada;"></div>
<div style="left:1275px;top:565px;width:1px;height:19px;background:#dadada;"></div>
<div style="left:1334px;top:565px;width:1px;height:19px;background:#dadada;"></div>
<div style="left:1393px;top:565px;width:1px;height:19px;background:#dadada;"></div>
<div style="left:1452px;top:565px;width:1px;height:19px;background:#dadada;"></div>
<div style="left:1511px;top:565px;width:1px;height:19px;background:#dadada;"></div>
<div style="left:1599px;top:565px;width:1px;height:20px;background:#dadada;"></div>
<div style="left:3px;top:584px;width:6px;height:1px;background:#dedede;"></div>
<div style="left:9px;top:565px;width:82px;height:20px;background:#ffffc0;border:1px solid #000;box-sizing:border-box;"></div>
<div style="left:445px;top:565px;width:78px;height:20px;background:#ffffc0;border:1px solid #000;box-sizing:border-box;"></div>
<div style="left:523px;top:565px;width:84px;height:20px;background:#ffffc0;border:1px solid #000;box-sizing:border-box;"></div>
<div style="left:607px;top:565px;width:92px;height:20px;background:#ffffc0;border:1px solid #000;box-sizing:border-box;"></div>
<div style="left:699px;top:565px;width:106px;height:20px;background:#ffffc0;border:1px solid #000;box-sizing:border-box;"></div>
<div style="left:805px;top:565px;width:59px;height:20px;background:#ffffc0;border:1px solid #000;box-sizing:border-box;"></div>
<div style="left:864px;top:565px;width:59px;height:20px;background:#ffffc0;border:1px solid #000;box-sizing:border-box;"></div>
<div style="left:923px;top:565px;width:59px;height:20px;background:#ffffc0;border:1px solid #000;box-sizing:border-box;"></div>
<div style="left:982px;top:565px;width:59px;height:20px;background:#ffffc0;border:1px solid #000;box-sizing:border-box;"></div>
<div style="left:1041px;top:565px;width:59px;height:20px;background:#ffffc0;border:1px solid #000;box-sizing:border-box;"></div>
<div style="left:1100px;top:565px;width:58px;height:20px;background:#ffffc0;border:1px solid #000;box-sizing:border-box;"></div>
<div style="left:1158px;top:565px;width:59px;height:20px;background:#ffffc0;border:1px solid #000;box-sizing:border-box;"></div>
<div style="left:1217px;top:565px;width:59px;height:20px;background:#ffffc0;border:1px solid #000;box-sizing:border-box;"></div>
<div style="left:1276px;top:565px;width:59px;height:20px;background:#ffffc0;border:1px solid #000;box-sizing:border-box;"></div>
<div style="left:1335px;top:565px;width:59px;height:20px;background:#ffffc0;border:1px solid #000;box-sizing:border-box;"></div>
<div style="left:1394px;top:565px;width:59px;height:20px;background:#ffffc0;border:1px solid #000;box-sizing:border-box;"></div>
<div style="left:1453px;top:565px;width:59px;height:20px;background:#ffffc0;border:1px solid #000;box-sizing:border-box;"></div>
<div class="t" style="left:13px;top:568.84px;font-size:12px;line-height:12px;color:#000;letter-spacing:-0.6px;">5056</div>
<div class="t" style="left:95px;top:568.84px;font-size:12px;line-height:12px;color:#000;letter-spacing:-0.6px;">304</div>
<div class="t" style="left:232px;top:568.84px;font-size:12px;line-height:12px;color:#000;letter-spacing:-0.6px;">Carmichael, Bradley P.</div>
<div class="t" style="left:341.00px;top:568.84px;width:100px;text-align:right;font-size:12px;line-height:12px;color:#000;letter-spacing:-0.6px;">45,000.00</div>
<div class="t" style="left:441.00px;top:568.84px;width:78px;text-align:right;font-size:12px;line-height:12px;color:#000;letter-spacing:-0.6px;">20.00</div>
<div class="t" style="left:519.00px;top:568.84px;width:84px;text-align:right;font-size:12px;line-height:12px;color:#000;letter-spacing:-0.6px;">54,000.00</div>
<div class="t" style="left:607.00px;top:568.84px;width:92px;text-align:center;font-size:12px;line-height:12px;color:#000;letter-spacing:-0.6px;">1.0</div>
<div class="t" style="left:699.00px;top:568.84px;width:106px;text-align:center;font-size:12px;line-height:12px;color:#000;letter-spacing:-0.6px;">10</div>
<div class="t" style="left:801.00px;top:568.84px;width:59px;text-align:right;font-size:12px;line-height:12px;color:#000;letter-spacing:-0.6px;">3,750.00</div>
<div class="t" style="left:860.00px;top:568.84px;width:59px;text-align:right;font-size:12px;line-height:12px;color:#000;letter-spacing:-0.6px;">3,750.00</div>
<div class="t" style="left:919.00px;top:568.84px;width:59px;text-align:right;font-size:12px;line-height:12px;color:#000;letter-spacing:-0.6px;">3,750.00</div>
<div class="t" style="left:978.00px;top:568.84px;width:59px;text-align:right;font-size:12px;line-height:12px;color:#000;letter-spacing:-0.6px;">3,750.00</div>
<div class="t" style="left:1037.00px;top:568.84px;width:59px;text-align:right;font-size:12px;line-height:12px;color:#000;letter-spacing:-0.6px;">3,750.00</div>
<div class="t" style="left:1096.00px;top:568.84px;width:58px;text-align:right;font-size:12px;line-height:12px;color:#000;letter-spacing:-0.6px;">3,750.00</div>
<div class="t" style="left:1154.00px;top:568.84px;width:59px;text-align:right;font-size:12px;line-height:12px;color:#000;letter-spacing:-0.6px;">3,750.00</div>
<div class="t" style="left:1213.00px;top:568.84px;width:59px;text-align:right;font-size:12px;line-height:12px;color:#000;letter-spacing:-0.6px;">3,750.00</div>
<div class="t" style="left:1272.00px;top:568.84px;width:59px;text-align:right;font-size:12px;line-height:12px;color:#000;letter-spacing:-0.6px;">3,750.00</div>
<div class="t" style="left:1331.00px;top:568.84px;width:59px;text-align:right;font-size:12px;line-height:12px;color:#000;letter-spacing:-0.6px;">4,500.00</div>
<div class="t" style="left:1390.00px;top:568.84px;width:59px;text-align:right;font-size:12px;line-height:12px;color:#000;letter-spacing:-0.6px;">4,500.00</div>
<div class="t" style="left:1449.00px;top:568.84px;width:59px;text-align:right;font-size:12px;line-height:12px;color:#000;letter-spacing:-0.6px;">4,500.00</div>
<div class="t" style="left:1508.00px;top:568.84px;width:88px;text-align:right;font-size:12px;line-height:12px;color:#000;letter-spacing:-0.6px;">47,250.00</div>
<div style="left:9px;top:585px;width:1590px;height:20px;background:#eeeeee;"></div>
<div style="left:90px;top:585px;width:1px;height:20px;background:#d6d6d6;"></div>
<div style="left:227px;top:585px;width:1px;height:20px;background:#d6d6d6;"></div>
<div style="left:344px;top:585px;width:1px;height:20px;background:#d6d6d6;"></div>
<div style="left:444px;top:585px;width:1px;height:20px;background:#d6d6d6;"></div>
<div style="left:522px;top:585px;width:1px;height:20px;background:#d6d6d6;"></div>
<div style="left:606px;top:585px;width:1px;height:20px;background:#d6d6d6;"></div>
<div style="left:698px;top:585px;width:1px;height:20px;background:#d6d6d6;"></div>
<div style="left:804px;top:585px;width:1px;height:20px;background:#d6d6d6;"></div>
<div style="left:863px;top:585px;width:1px;height:20px;background:#d6d6d6;"></div>
<div style="left:922px;top:585px;width:1px;height:20px;background:#d6d6d6;"></div>
<div style="left:981px;top:585px;width:1px;height:20px;background:#d6d6d6;"></div>
<div style="left:1040px;top:585px;width:1px;height:20px;background:#d6d6d6;"></div>
<div style="left:1099px;top:585px;width:1px;height:20px;background:#d6d6d6;"></div>
<div style="left:1157px;top:585px;width:1px;height:20px;background:#d6d6d6;"></div>
<div style="left:1216px;top:585px;width:1px;height:20px;background:#d6d6d6;"></div>
<div style="left:1275px;top:585px;width:1px;height:20px;background:#d6d6d6;"></div>
<div style="left:1334px;top:585px;width:1px;height:20px;background:#d6d6d6;"></div>
<div style="left:1393px;top:585px;width:1px;height:20px;background:#d6d6d6;"></div>
<div style="left:1452px;top:585px;width:1px;height:20px;background:#d6d6d6;"></div>
<div style="left:1511px;top:585px;width:1px;height:20px;background:#d6d6d6;"></div>
<div style="left:8px;top:585px;width:1px;height:21px;background:#d6d6d6;"></div>
<div style="left:1599px;top:585px;width:1px;height:21px;background:#d6d6d6;"></div>
<div style="left:3px;top:605px;width:6px;height:1px;background:#dedede;"></div>
<div class="t" style="left:95px;top:589.84px;font-size:12px;line-height:12px;color:#000;letter-spacing:-0.6px;">Total 304</div>
<div class="t" style="left:341.00px;top:589.84px;width:100px;text-align:right;font-size:12px;line-height:12px;color:#000;letter-spacing:-0.6px;">114,450.00</div>
<div class="t" style="left:519.00px;top:589.84px;width:84px;text-align:right;font-size:12px;line-height:12px;color:#000;letter-spacing:-0.6px;">137,340.00</div>
<div class="t" style="left:607.00px;top:589.84px;width:92px;text-align:center;font-size:12px;line-height:12px;color:#000;letter-spacing:-0.6px;">3.0</div>
<div class="t" style="left:801.00px;top:589.84px;width:59px;text-align:right;font-size:12px;line-height:12px;color:#000;letter-spacing:-0.6px;">9,537.50</div>
<div class="t" style="left:860.00px;top:589.84px;width:59px;text-align:right;font-size:12px;line-height:12px;color:#000;letter-spacing:-0.6px;">9,537.50</div>
<div class="t" style="left:919.00px;top:589.84px;width:59px;text-align:right;font-size:12px;line-height:12px;color:#000;letter-spacing:-0.6px;">9,537.50</div>
<div class="t" style="left:978.00px;top:589.84px;width:59px;text-align:right;font-size:12px;line-height:12px;color:#000;letter-spacing:-0.6px;">9,537.50</div>
<div class="t" style="left:1037.00px;top:589.84px;width:59px;text-align:right;font-size:12px;line-height:12px;color:#000;letter-spacing:-0.6px;">9,537.50</div>
<div class="t" style="left:1096.00px;top:589.84px;width:58px;text-align:right;font-size:12px;line-height:12px;color:#000;letter-spacing:-0.6px;">9,537.50</div>
<div class="t" style="left:1154.00px;top:589.84px;width:59px;text-align:right;font-size:12px;line-height:12px;color:#000;letter-spacing:-0.6px;">9,537.50</div>
<div class="t" style="left:1213.00px;top:589.84px;width:59px;text-align:right;font-size:12px;line-height:12px;color:#000;letter-spacing:-0.6px;">9,537.50</div>
<div class="t" style="left:1272.00px;top:589.84px;width:59px;text-align:right;font-size:12px;line-height:12px;color:#000;letter-spacing:-0.6px;">9,537.50</div>
<div class="t" style="left:1331.00px;top:589.84px;width:59px;text-align:right;font-size:12px;line-height:12px;color:#000;letter-spacing:-0.6px;">11,445.00</div>
<div class="t" style="left:1390.00px;top:589.84px;width:59px;text-align:right;font-size:12px;line-height:12px;color:#000;letter-spacing:-0.6px;">11,445.00</div>
<div class="t" style="left:1449.00px;top:589.84px;width:59px;text-align:right;font-size:12px;line-height:12px;color:#000;letter-spacing:-0.6px;">11,445.00</div>
<div class="t" style="left:1508.00px;top:589.84px;width:88px;text-align:right;font-size:12px;line-height:12px;color:#000;letter-spacing:-0.6px;">120,172.50</div>
<div style="left:9px;top:606px;width:1590px;height:19px;background:#eeeeee;"></div>
<div style="left:90px;top:606px;width:1px;height:19px;background:#d6d6d6;"></div>
<div style="left:227px;top:606px;width:1px;height:19px;background:#d6d6d6;"></div>
<div style="left:344px;top:606px;width:1px;height:19px;background:#d6d6d6;"></div>
<div style="left:444px;top:606px;width:1px;height:19px;background:#d6d6d6;"></div>
<div style="left:522px;top:606px;width:1px;height:19px;background:#d6d6d6;"></div>
<div style="left:606px;top:606px;width:1px;height:19px;background:#d6d6d6;"></div>
<div style="left:698px;top:606px;width:1px;height:19px;background:#d6d6d6;"></div>
<div style="left:804px;top:606px;width:1px;height:19px;background:#d6d6d6;"></div>
<div style="left:863px;top:606px;width:1px;height:19px;background:#d6d6d6;"></div>
<div style="left:922px;top:606px;width:1px;height:19px;background:#d6d6d6;"></div>
<div style="left:981px;top:606px;width:1px;height:19px;background:#d6d6d6;"></div>
<div style="left:1040px;top:606px;width:1px;height:19px;background:#d6d6d6;"></div>
<div style="left:1099px;top:606px;width:1px;height:19px;background:#d6d6d6;"></div>
<div style="left:1157px;top:606px;width:1px;height:19px;background:#d6d6d6;"></div>
<div style="left:1216px;top:606px;width:1px;height:19px;background:#d6d6d6;"></div>
<div style="left:1275px;top:606px;width:1px;height:19px;background:#d6d6d6;"></div>
<div style="left:1334px;top:606px;width:1px;height:19px;background:#d6d6d6;"></div>
<div style="left:1393px;top:606px;width:1px;height:19px;background:#d6d6d6;"></div>
<div style="left:1452px;top:606px;width:1px;height:19px;background:#d6d6d6;"></div>
<div style="left:1511px;top:606px;width:1px;height:19px;background:#d6d6d6;"></div>
<div style="left:8px;top:606px;width:1px;height:20px;background:#d6d6d6;"></div>
<div style="left:1599px;top:606px;width:1px;height:20px;background:#d6d6d6;"></div>
<div style="left:9px;top:625px;width:1591px;height:1px;background:#d0d0d0;"></div>
<div style="left:3px;top:625px;width:6px;height:1px;background:#dedede;"></div>
<div class="t" style="left:95px;top:610.42px;font-size:12.5px;line-height:12.5px;font-weight:bold;color:#000;letter-spacing:-0.55px;">GRAND TOTAL</div>
<div class="t" style="left:341.00px;top:610.42px;width:100px;text-align:right;font-size:12.5px;line-height:12.5px;font-weight:bold;color:#000;letter-spacing:-0.55px;">552,665.80</div>
<div class="t" style="left:519.00px;top:610.42px;width:84px;text-align:right;font-size:12.5px;line-height:12.5px;font-weight:bold;color:#000;letter-spacing:-0.55px;">605,466.59</div>
<div class="t" style="left:607.00px;top:610.42px;width:92px;text-align:center;font-size:12.5px;line-height:12.5px;font-weight:bold;color:#000;letter-spacing:-0.55px;">12.0</div>
<div class="t" style="left:801.00px;top:610.42px;width:59px;text-align:right;font-size:12.5px;line-height:12.5px;font-weight:bold;color:#000;letter-spacing:-0.55px;">47,214.72</div>
<div class="t" style="left:860.00px;top:610.42px;width:59px;text-align:right;font-size:12.5px;line-height:12.5px;font-weight:bold;color:#000;letter-spacing:-0.55px;">47,214.72</div>
<div class="t" style="left:919.00px;top:610.42px;width:59px;text-align:right;font-size:12.5px;line-height:12.5px;font-weight:bold;color:#000;letter-spacing:-0.55px;">47,214.72</div>
<div class="t" style="left:978.00px;top:610.42px;width:59px;text-align:right;font-size:12.5px;line-height:12.5px;font-weight:bold;color:#000;letter-spacing:-0.55px;">47,214.72</div>
<div class="t" style="left:1037.00px;top:610.42px;width:59px;text-align:right;font-size:12.5px;line-height:12.5px;font-weight:bold;color:#000;letter-spacing:-0.55px;">47,214.72</div>
<div class="t" style="left:1096.00px;top:610.42px;width:58px;text-align:right;font-size:12.5px;line-height:12.5px;font-weight:bold;color:#000;letter-spacing:-0.55px;">47,214.72</div>
<div class="t" style="left:1154.00px;top:610.42px;width:59px;text-align:right;font-size:12.5px;line-height:12.5px;font-weight:bold;color:#000;letter-spacing:-0.55px;">48,548.04</div>
<div class="t" style="left:1213.00px;top:610.42px;width:59px;text-align:right;font-size:12.5px;line-height:12.5px;font-weight:bold;color:#000;letter-spacing:-0.55px;">48,548.04</div>
<div class="t" style="left:1272.00px;top:610.42px;width:59px;text-align:right;font-size:12.5px;line-height:12.5px;font-weight:bold;color:#000;letter-spacing:-0.55px;">48,548.04</div>
<div class="t" style="left:1331.00px;top:610.42px;width:59px;text-align:right;font-size:12.5px;line-height:12.5px;font-weight:bold;color:#000;letter-spacing:-0.55px;">50,455.54</div>
<div class="t" style="left:1390.00px;top:610.42px;width:59px;text-align:right;font-size:12.5px;line-height:12.5px;font-weight:bold;color:#000;letter-spacing:-0.55px;">50,455.54</div>
<div class="t" style="left:1449.00px;top:610.42px;width:59px;text-align:right;font-size:12.5px;line-height:12.5px;font-weight:bold;color:#000;letter-spacing:-0.55px;">50,455.54</div>
<div class="t" style="left:1508.00px;top:610.42px;width:88px;text-align:right;font-size:12.5px;line-height:12.5px;font-weight:bold;color:#000;letter-spacing:-0.55px;">580,299.06</div>
<div style="left:9px;top:605px;width:1591px;height:1px;background:#000;"></div>
<div style="left:3px;top:645px;width:70px;height:1px;background:#c8c8c8;"></div>
<div style="left:267px;top:645px;width:1360px;height:1px;background:#c8c8c8;"></div>
<div style="left:73px;top:645px;width:195px;height:31px;background:#f9f9f9;border-left:1px solid #c8c8c8;border-right:1px solid #c8c8c8;box-sizing:border-box;"></div>
<div style="left:73px;top:675px;width:195px;height:2px;background:#275f67;"></div>
<svg style="position:absolute;left:23px;top:657px" width="6" height="9" viewBox="0 0 6 9"><path d="M5 0.5V8.5L0.5 4.5Z" fill="#7a7a7a"/></svg>
<svg style="position:absolute;left:48px;top:657px" width="6" height="9" viewBox="0 0 6 9"><path d="M1 0.5V8.5L5.5 4.5Z" fill="#7a7a7a"/></svg>
<div style="left:83px;top:654px;width:21px;height:12px;background:#7b3be3;color:#fff;font:bold 8px/12px 'Liberation Sans',sans-serif;text-align:center;letter-spacing:-0.3px">DX</div>
<div class="t" style="left:109px;top:654.00px;font-size:13px;line-height:13px;color:#275f67;">01 Payroll Forecast Entry</div>
<div style="left:2px;top:681px;width:1626px;height:25px;background:#275f67;"></div>
<svg style="position:absolute;left:4px;top:684px" width="18" height="18" viewBox="0 0 18 18"><circle cx="9" cy="9" r="7.7" fill="none" stroke="#fff" stroke-width="1.1"/><rect x="8.1" y="7.5" width="1.8" height="6" fill="#fff"/><circle cx="9" cy="5.2" r="1.1" fill="#fff"/></svg>
<div style="left:25px;top:685px;width:1px;height:17px;background:#b9cdd0;"></div>
<div class="t" style="left:36px;top:688.35px;font-size:11.4px;line-height:11.4px;color:#fff;">16&nbsp; rows displayed</div>
<div style="left:140px;top:685px;width:1px;height:17px;background:#b9cdd0;"></div>
<div class="t" style="left:151px;top:688.60px;font-size:11.1px;line-height:11.1px;color:#fff;">Elapsed time 1.870s (Database: 0.318s)</div>
<div style="left:358px;top:685px;width:1px;height:17px;background:#b9cdd0;"></div>
<div class="t" style="left:368px;top:687.67px;font-size:12.2px;line-height:12.2px;color:#fff;">No drill through defined.</div>
<div style="left:1442px;top:692px;width:10px;height:2px;background:#fff;"></div>
<div style="left:1461px;top:692px;width:98px;height:2px;background:#fff;"></div>
<div style="left:1479px;top:685px;width:5px;height:17px;background:#fff;"></div>
<div style="left:1568px;top:692px;width:10px;height:2px;background:#fff;"></div>
<div style="left:1572px;top:688px;width:2px;height:10px;background:#fff;"></div>
<div class="t" style="left:1591px;top:688.10px;font-size:11.7px;line-height:11.7px;color:#fff;">100%</div>
</body></html>
